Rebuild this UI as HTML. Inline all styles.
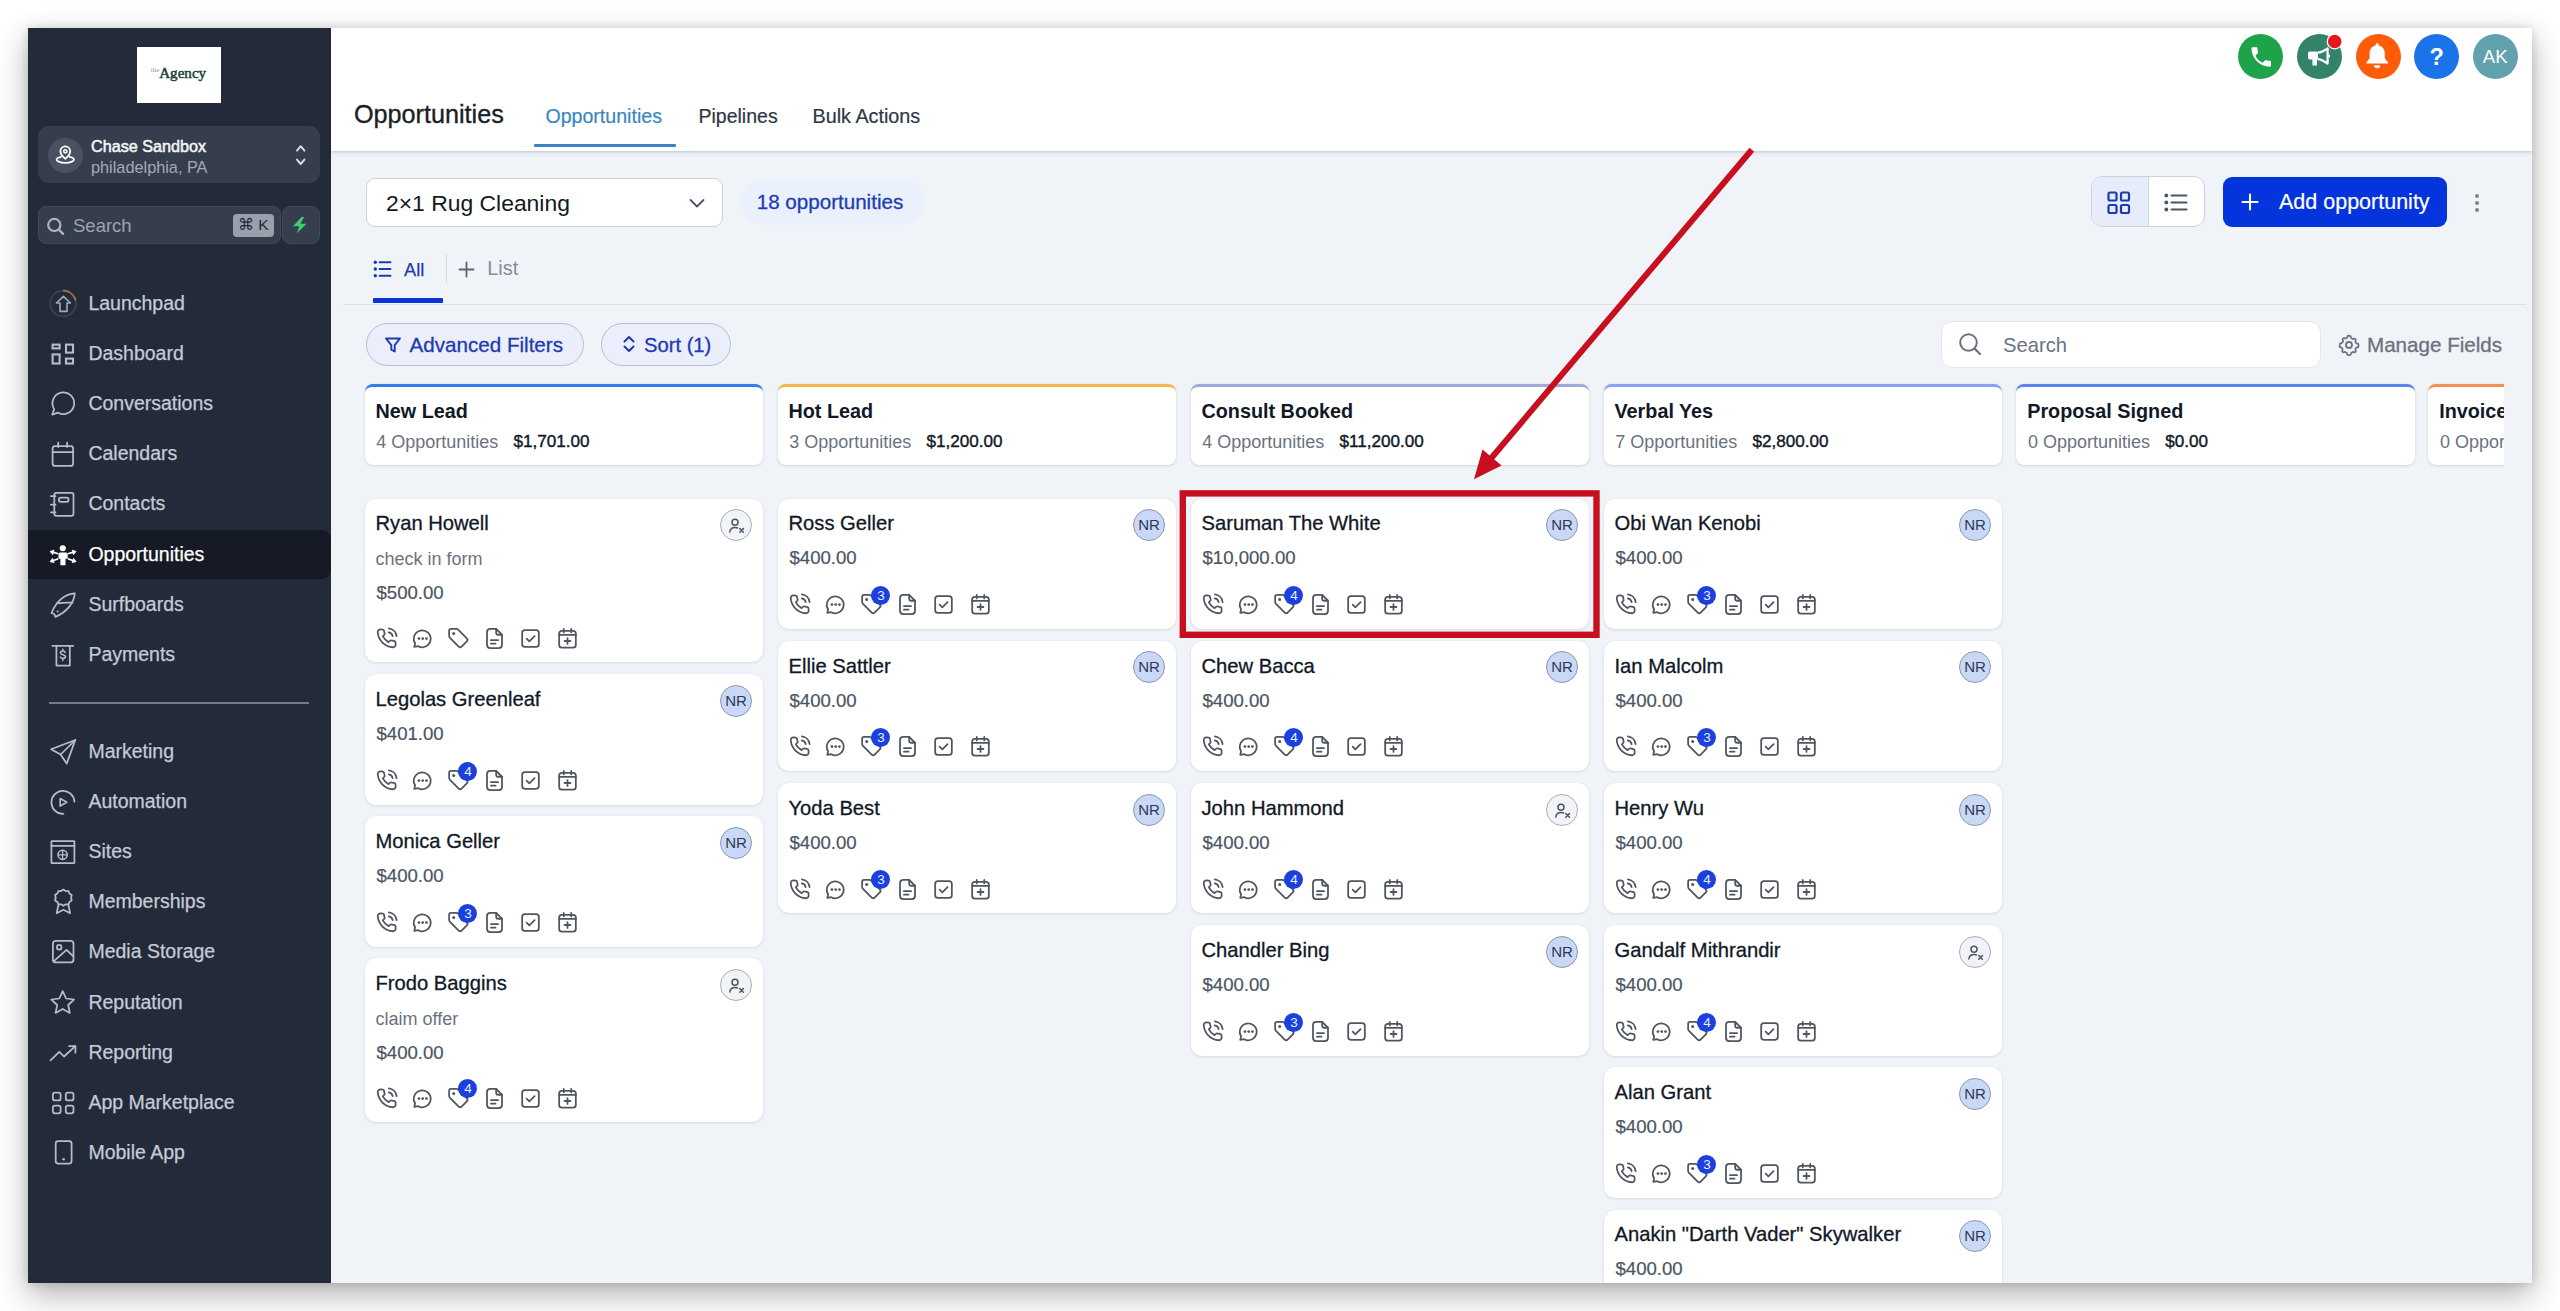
<!DOCTYPE html>
<html><head><meta charset="utf-8">
<style>
*{box-sizing:border-box;margin:0;padding:0}
html,body{width:2560px;height:1311px;overflow:hidden;background:#fff;font-family:"Liberation Sans",sans-serif}
.t{position:absolute;white-space:nowrap;line-height:1}
.ic{position:absolute;overflow:visible}
.b{position:absolute}
#shadow{position:absolute;left:28px;top:28px;width:2504px;height:1255px;box-shadow:0 12px 30px rgba(0,0,0,0.30),0 0 10px rgba(0,0,0,0.14)}
#win{position:absolute;left:0;top:0;width:2560px;height:1311px;clip-path:inset(28px 28px 28px 28px);background:#f0f4f9;overflow:hidden}
#side{position:absolute;left:28px;top:28px;width:303px;height:1255px;background:#232a3a}
#hdr{position:absolute;left:331px;top:28px;width:2201px;height:123px;background:#fff;box-shadow:0 1px 2px rgba(16,24,40,0.14),0 2px 6px rgba(16,24,40,0.08)}
.card{position:absolute;width:398.8px;background:#fff;border-radius:11px;box-shadow:0 1px 3px rgba(16,24,40,0.10),0 0 1px rgba(16,24,40,0.10)}
.colh{position:absolute;width:398.8px;height:80.5px;background:#fff;border-radius:8px;box-shadow:0 1px 3px rgba(16,24,40,0.12),0 0 1px rgba(16,24,40,0.12)}
.av{position:absolute;width:32px;height:32px;border-radius:50%;}
.nr{background:#c9d8f6;border:1px solid #8e98ab;color:#2b3a57;font-size:15px;text-align:center;line-height:30px}
.px{background:#f1f3f6;border:1px solid #a9afb9}
.badge{position:absolute;width:19px;height:19px;border-radius:50%;background:#1c40de;color:#e8f0ff;font-size:13.5px;line-height:19px;text-align:center}
.hc{position:absolute;width:45px;height:45px;border-radius:50%}
</style></head><body>
<div id="shadow"></div>
<div id="win">
<div id="side"></div>
<div id="hdr"></div>

<div class="b" style="left:137px;top:47px;width:84px;height:56px;background:#fff"></div>
<div class="t" style="left:159.2px;top:66.4px;font-size:15.1px;color:#1c4238;font-weight:400;font-family:'Liberation Serif',serif;-webkit-text-stroke:0.5px #1c4238">Agency</div>
<div class="t" style="left:150.8px;top:67.1px;font-size:7px;color:#6fa897;font-weight:400;font-family:'Liberation Serif',serif">the</div>
<div class="b" style="left:38px;top:126px;width:282px;height:57px;background:#363e4d;border-radius:11px"></div>
<div class="b" style="left:48px;top:137.5px;width:35px;height:35px;border-radius:50%;background:#4a5262"></div>
<svg class="ic" style="left:50px;top:140px" width="30" height="30" viewBox="50 140 30 30"><path d="M65.3 146.4a4.9 4.9 0 0 0-4.9 4.9c0 3.4 4.9 7.4 4.9 7.4s4.9-4 4.9-7.4a4.9 4.9 0 0 0-4.9-4.9Z" fill="none" stroke="#fff" stroke-width="1.8" stroke-linejoin="round"/><circle cx="65.3" cy="151.3" r="1.6" fill="none" stroke="#fff" stroke-width="1.6"/><path d="M61 156.8c-2.8.6-4.4 1.6-4.4 2.8 0 1.8 3.9 3.3 8.7 3.3s8.7-1.5 8.7-3.3c0-1.2-1.6-2.2-4.4-2.8" fill="none" stroke="#fff" stroke-width="1.8" stroke-linecap="round"/></svg>
<div class="t" style="left:91.0px;top:138.3px;font-size:16.2px;color:#f3f4f6;font-weight:400;-webkit-text-stroke:0.55px #f3f4f6">Chase Sandbox</div>
<div class="t" style="left:91.0px;top:159.2px;font-size:16.3px;color:#a3aab6;font-weight:400;">philadelphia, PA</div>
<svg class="ic" style="left:290px;top:140px" width="20" height="30" viewBox="290 140 20 30"><path d="M297 150.6l3.7-4.4 3.7 4.4M297 159.6l3.7 4.4 3.7-4.4" fill="none" stroke="#d6dae0" stroke-width="2" stroke-linecap="round" stroke-linejoin="round"/></svg>
<div class="b" style="left:38px;top:206px;width:243px;height:38px;background:#363e4d;border-radius:8px;border:1px solid #414958"></div>
<svg class="ic" style="left:44px;top:214px" width="24" height="24" viewBox="44 214 24 24"><circle cx="54.3" cy="225" r="6.1" fill="none" stroke="#adb3bd" stroke-width="2.2"/><path d="M58.8 229.6l4.3 4.2" stroke="#adb3bd" stroke-width="2.4" stroke-linecap="round"/></svg>
<div class="t" style="left:73.0px;top:216.7px;font-size:18.5px;color:#9ca3af;font-weight:400;">Search</div>
<div class="b" style="left:233px;top:214px;width:41px;height:22.5px;background:#9aa0ab;border-radius:4px"></div>
<div class="t" style="left:238.0px;top:217.4px;font-size:15.5px;color:#1f2937;font-weight:400;">&#8984; K</div>
<div class="b" style="left:282px;top:206px;width:38px;height:38px;background:#363e4d;border-radius:8px;border:1px solid #414958"></div>
<svg class="ic" style="left:290px;top:214px" width="22" height="22" viewBox="290 214 22 22"><path d="M301.6 216.9 293 226.3h6.3l-2.5 7 9.8-9.6h-6.2l3.8-6.8Z" fill="#3ecf6e"/></svg>
<div class="b" style="left:28px;top:529.5px;width:303px;height:49.5px;background:#151a24;border-radius:0 9px 9px 0"></div>
<div class="t" style="left:88.4px;top:293.5px;font-size:19.5px;color:#c5cbd5;font-weight:400;-webkit-text-stroke:0.25px #c5cbd5">Launchpad</div>
<svg class="ic" style="left:48.5px;top:289.5px" width="28" height="28" viewBox="0 0 28 28"><circle cx="14.1" cy="13.6" r="12.9" fill="none" stroke="#3a4353" stroke-width="1.7"/><path d="M14.8 0.7A12.9 12.9 0 0 1 26.4 9.6" fill="none" stroke="#a9714f" stroke-width="1.8" stroke-linecap="round" stroke-linejoin="round"/><path d="M14.4 6.3 21.4 13H18v8.4h-7V13H7.4Z" fill="none" stroke="#a3aab6" stroke-width="1.6" stroke-linecap="round" stroke-linejoin="round"/></svg>
<div class="t" style="left:88.4px;top:343.7px;font-size:19.5px;color:#c5cbd5;font-weight:400;-webkit-text-stroke:0.25px #c5cbd5">Dashboard</div>
<svg class="ic" style="left:48.5px;top:339.7px" width="28" height="28" viewBox="0 0 28 28"><rect x="3.6" y="4.6" width="7" height="3.8" rx="0" fill="none" stroke="#b7bdc8" stroke-width="2.1"/><rect x="17" y="4.6" width="7" height="8" rx="0" fill="none" stroke="#b7bdc8" stroke-width="2.1"/><rect x="3.6" y="14.4" width="7" height="9.1" rx="0" fill="none" stroke="#b7bdc8" stroke-width="2.1"/><rect x="17" y="18.6" width="7" height="4.9" rx="0" fill="none" stroke="#b7bdc8" stroke-width="2.1"/></svg>
<div class="t" style="left:88.4px;top:393.9px;font-size:19.5px;color:#c5cbd5;font-weight:400;-webkit-text-stroke:0.25px #c5cbd5">Conversations</div>
<svg class="ic" style="left:48.5px;top:389.9px" width="28" height="28" viewBox="0 0 28 28"><path d="M3.2 24.6 5.2 19.1A10.85 10.85 0 1 1 9 22.7Z" fill="none" stroke="#b7bdc8" stroke-width="1.75" stroke-linecap="round" stroke-linejoin="round"/></svg>
<div class="t" style="left:88.4px;top:444.1px;font-size:19.5px;color:#c5cbd5;font-weight:400;-webkit-text-stroke:0.25px #c5cbd5">Calendars</div>
<svg class="ic" style="left:48.5px;top:440.1px" width="28" height="28" viewBox="0 0 28 28"><rect x="3.6" y="6.1" width="20.5" height="19.8" rx="2.5" fill="none" stroke="#b7bdc8" stroke-width="1.75"/><path d="M3.6 12.1h20.5M9.2 2.6v4.5M18.1 2.6v4.5" fill="none" stroke="#b7bdc8" stroke-width="1.75" stroke-linecap="round" stroke-linejoin="round"/></svg>
<div class="t" style="left:88.4px;top:494.3px;font-size:19.5px;color:#c5cbd5;font-weight:400;-webkit-text-stroke:0.25px #c5cbd5">Contacts</div>
<svg class="ic" style="left:48.5px;top:490.3px" width="28" height="28" viewBox="0 0 28 28"><rect x="5.3" y="2.9" width="19.2" height="22.9" rx="2" fill="none" stroke="#b7bdc8" stroke-width="1.75"/><rect x="9.8" y="7.7" width="9.8" height="4.1" rx="2" fill="none" stroke="#b7bdc8" stroke-width="1.75"/><path d="M1.9 6.1h4.6M1.9 14.7h4.6M1.9 22.3h4.6" fill="none" stroke="#b7bdc8" stroke-width="1.75" stroke-linecap="round" stroke-linejoin="round"/></svg>
<div class="t" style="left:88.4px;top:544.5px;font-size:19.5px;color:#ffffff;font-weight:400;-webkit-text-stroke:0.25px #ffffff">Opportunities</div>
<svg class="ic" style="left:48.5px;top:540.5px" width="28" height="28" viewBox="0 0 28 28"><circle cx="13.8" cy="7.2" r="3.05" fill="#ffffff"/><path d="M11.3 11.6h5.6c1 0 1.8.8 1.8 1.8v4.3h-2.2v6.5h-5.1v-6.5H9.5v-4.3c0-1 .8-1.8 1.8-1.8Z" fill="#ffffff"/><path d="M8.6 12.5 4.5 11.4M19.6 12.5l4.1-1.1M8.6 18 4.4 19.5M19.6 18l4.2 1.5" fill="none" stroke="#ffffff" stroke-width="1.8" stroke-linecap="round" stroke-linejoin="round"/><path d="M1 10.4 5.1 9.05 3.83 13.67Z M27.2 10.4 23.1 9.05 24.37 13.67Z M1 20.7 5.19 21.75 3.59 17.23Z M27.2 20.7 23.01 21.75 24.61 17.23Z" fill="#ffffff" stroke="#ffffff" stroke-width="0.6" stroke-linejoin="round"/></svg>
<div class="t" style="left:88.4px;top:594.7px;font-size:19.5px;color:#c5cbd5;font-weight:400;-webkit-text-stroke:0.25px #c5cbd5">Surfboards</div>
<svg class="ic" style="left:48.5px;top:590.7px" width="28" height="28" viewBox="0 0 28 28"><path d="M25.8 2.3C16.5 2.6 7.5 9.5 2.5 22l3 1.2.9 2.7C18 21 25 12 25.8 2.3Z" fill="none" stroke="#b7bdc8" stroke-width="1.75" stroke-linecap="round" stroke-linejoin="round"/><path d="M7.8 12.4C12.5 11.6 18 11.4 23.5 11.6" fill="none" stroke="#b7bdc8" stroke-width="1.75" stroke-linecap="round" stroke-linejoin="round"/><circle cx="8.6" cy="20.4" r="1" fill="#b7bdc8"/></svg>
<div class="t" style="left:88.4px;top:644.9px;font-size:19.5px;color:#c5cbd5;font-weight:400;-webkit-text-stroke:0.25px #c5cbd5">Payments</div>
<svg class="ic" style="left:48.5px;top:640.9px" width="28" height="28" viewBox="0 0 28 28"><path d="M3.3 4.8h21M7.4 4.8v19.7h13.4V4.8" fill="none" stroke="#b7bdc8" stroke-width="1.75" stroke-linecap="round" stroke-linejoin="round"/><path d="M16.2 11.3c-.4-.8-1.2-1.3-2.4-1.3-1.4 0-2.4.7-2.4 1.8 0 2.5 5 1.2 5 3.8 0 1.1-1 1.8-2.5 1.8-1.2 0-2.1-.6-2.5-1.3M13.8 8.4v1.6M13.8 17.9v1.6" fill="none" stroke="#b7bdc8" stroke-width="1.6" stroke-linecap="round" stroke-linejoin="round"/></svg>
<div class="b" style="left:49px;top:702px;width:260px;height:2px;background:#737b88"></div>
<div class="t" style="left:88.4px;top:741.5px;font-size:19.5px;color:#c5cbd5;font-weight:400;-webkit-text-stroke:0.25px #c5cbd5">Marketing</div>
<svg class="ic" style="left:48.5px;top:737.5px" width="28" height="28" viewBox="0 0 28 28"><path d="M26.3 2 2.1 11.2l9.5 5.3 6.1 9.1Z" fill="none" stroke="#b7bdc8" stroke-width="1.75" stroke-linecap="round" stroke-linejoin="round"/><path d="M11.6 16.5 26.3 2" fill="none" stroke="#b7bdc8" stroke-width="1.75" stroke-linecap="round" stroke-linejoin="round"/></svg>
<div class="t" style="left:88.4px;top:791.7px;font-size:19.5px;color:#c5cbd5;font-weight:400;-webkit-text-stroke:0.25px #c5cbd5">Automation</div>
<svg class="ic" style="left:48.5px;top:787.7px" width="28" height="28" viewBox="0 0 28 28"><path d="M25.4 13.6A11.5 11.5 0 1 0 14.4 25.8" fill="none" stroke="#b7bdc8" stroke-width="1.75" stroke-linecap="round" stroke-linejoin="round"/><path d="M11.2 10.6v7.4l6.6-3.7Z" fill="none" stroke="#b7bdc8" stroke-width="1.7" stroke-linecap="round" stroke-linejoin="round"/></svg>
<div class="t" style="left:88.4px;top:841.9px;font-size:19.5px;color:#c5cbd5;font-weight:400;-webkit-text-stroke:0.25px #c5cbd5">Sites</div>
<svg class="ic" style="left:48.5px;top:837.9px" width="28" height="28" viewBox="0 0 28 28"><rect x="2.4" y="3" width="23" height="22.2" rx="0.5" fill="none" stroke="#b7bdc8" stroke-width="1.75"/><path d="M2.4 7.8h23" fill="none" stroke="#b7bdc8" stroke-width="1.75" stroke-linecap="round" stroke-linejoin="round"/><circle cx="13.6" cy="16.8" r="4.6" fill="none" stroke="#b7bdc8" stroke-width="1.5"/><path d="M9 16.8h9.2M13.6 12.2v9.2" fill="none" stroke="#b7bdc8" stroke-width="1.3" stroke-linecap="round" stroke-linejoin="round"/></svg>
<div class="t" style="left:88.4px;top:892.1px;font-size:19.5px;color:#c5cbd5;font-weight:400;-webkit-text-stroke:0.25px #c5cbd5">Memberships</div>
<svg class="ic" style="left:48.5px;top:888.1px" width="28" height="28" viewBox="0 0 28 28"><path d="M14.4 1.6l2.3 1.5 2.7-.1 1 2.5 2.3 1.5-.6 2.7.6 2.7-2.3 1.5-1 2.5-2.7-.1-2.3 1.5-2.3-1.5-2.7.1-1-2.5L6.1 12.4l.6-2.7-.6-2.7 2.3-1.5 1-2.5 2.7.1Z" fill="none" stroke="#b7bdc8" stroke-width="1.75" stroke-linecap="round" stroke-linejoin="round"/><path d="M9.5 16.5 7.7 25.2l6.7-3.4 6.7 3.4-1.8-8.7" fill="none" stroke="#b7bdc8" stroke-width="1.75" stroke-linecap="round" stroke-linejoin="round"/></svg>
<div class="t" style="left:88.4px;top:942.3px;font-size:19.5px;color:#c5cbd5;font-weight:400;-webkit-text-stroke:0.25px #c5cbd5">Media Storage</div>
<svg class="ic" style="left:48.5px;top:938.3px" width="28" height="28" viewBox="0 0 28 28"><rect x="3.9" y="2.9" width="20.6" height="21.5" rx="3" fill="none" stroke="#b7bdc8" stroke-width="1.75"/><circle cx="10.2" cy="9.2" r="2.3" fill="none" stroke="#b7bdc8" stroke-width="1.75"/><path d="M4.6 23.4 17.5 11.8l6.6 6.4" fill="none" stroke="#b7bdc8" stroke-width="1.75" stroke-linecap="round" stroke-linejoin="round"/></svg>
<div class="t" style="left:88.4px;top:992.5px;font-size:19.5px;color:#c5cbd5;font-weight:400;-webkit-text-stroke:0.25px #c5cbd5">Reputation</div>
<svg class="ic" style="left:48.5px;top:988.5px" width="28" height="28" viewBox="0 0 28 28"><path d="M13.7 2.2 17.1 9.5 25.1 10.5 19.2 16 20.8 23.9 13.7 20 6.6 23.9 8.2 16 2.3 10.5 10.3 9.5Z" fill="none" stroke="#b7bdc8" stroke-width="1.75" stroke-linecap="round" stroke-linejoin="round"/></svg>
<div class="t" style="left:88.4px;top:1042.7px;font-size:19.5px;color:#c5cbd5;font-weight:400;-webkit-text-stroke:0.25px #c5cbd5">Reporting</div>
<svg class="ic" style="left:48.5px;top:1038.7px" width="28" height="28" viewBox="0 0 28 28"><path d="M1.5 21.3 10.3 12.8l4.7 4.7L26.3 7.2" fill="none" stroke="#b7bdc8" stroke-width="1.75" stroke-linecap="round" stroke-linejoin="round"/><path d="M20 7.1h6.4v6.6" fill="none" stroke="#b7bdc8" stroke-width="1.75" stroke-linecap="round" stroke-linejoin="round"/></svg>
<div class="t" style="left:88.4px;top:1092.9px;font-size:19.5px;color:#c5cbd5;font-weight:400;-webkit-text-stroke:0.25px #c5cbd5">App Marketplace</div>
<svg class="ic" style="left:48.5px;top:1088.9px" width="28" height="28" viewBox="0 0 28 28"><rect x="3.9" y="3.7" width="7.7" height="7.7" rx="2" fill="none" stroke="#b7bdc8" stroke-width="1.75"/><rect x="16.8" y="3.7" width="7.7" height="7.7" rx="2" fill="none" stroke="#b7bdc8" stroke-width="1.75"/><rect x="3.9" y="16.6" width="7.7" height="7.7" rx="2" fill="none" stroke="#b7bdc8" stroke-width="1.75"/><rect x="16.8" y="16.6" width="7.7" height="7.7" rx="2" fill="none" stroke="#b7bdc8" stroke-width="1.75"/></svg>
<div class="t" style="left:88.4px;top:1143.1px;font-size:19.5px;color:#c5cbd5;font-weight:400;-webkit-text-stroke:0.25px #c5cbd5">Mobile App</div>
<svg class="ic" style="left:48.5px;top:1139.1px" width="28" height="28" viewBox="0 0 28 28"><rect x="6.7" y="2.1" width="15.9" height="22.5" rx="2.5" fill="none" stroke="#b7bdc8" stroke-width="1.75"/><circle cx="14.6" cy="20.3" r="1.3" fill="#b7bdc8"/></svg>
<div class="t" style="left:354.0px;top:101.7px;font-size:25.2px;color:#1a1e25;font-weight:400;-webkit-text-stroke:0.35px #1a1e25">Opportunities</div>
<div class="t" style="left:545.4px;top:106.9px;font-size:19.6px;color:#3b86c1;font-weight:400;-webkit-text-stroke:0.2px #3b86c1">Opportunities</div>
<div class="t" style="left:698.5px;top:107.0px;font-size:19.5px;color:#2f3744;font-weight:400;-webkit-text-stroke:0.2px #2f3744">Pipelines</div>
<div class="t" style="left:812.5px;top:106.7px;font-size:19.8px;color:#2f3744;font-weight:400;-webkit-text-stroke:0.2px #2f3744">Bulk Actions</div>
<div class="b" style="left:534px;top:144px;width:141.5px;height:3px;background:#3a83bf;border-radius:1px"></div>
<div class="hc" style="left:2238.3px;top:33.5px;background:#1fa34a"></div>
<div class="hc" style="left:2296.8px;top:33.5px;background:#33836a"></div>
<div class="hc" style="left:2355.5px;top:33.5px;background:#ff5c0a"></div>
<div class="hc" style="left:2414.1px;top:33.5px;background:#1a73e8"></div>
<div class="hc" style="left:2472.9px;top:33.5px;background:#62a1ae"></div>
<svg class="ic" style="left:2230px;top:28px" width="300" height="60" viewBox="2230 28 300 60"><g transform="translate(2248.25 43.95) scale(1.083)"><path d="M6.62 10.79c1.44 2.83 3.76 5.14 6.59 6.59l2.2-2.2c.27-.27.67-.36 1.02-.24 1.12.37 2.33.57 3.57.57.55 0 1 .45 1 1V20c0 .55-.45 1-1 1-9.39 0-17-7.61-17-17 0-.55.45-1 1-1h3.5c.55 0 1 .45 1 1 0 1.25.2 2.45.57 3.57.11.35.03.74-.25 1.02l-2.2 2.2z" fill="#fff"/></g><rect x="2308" y="51.6" width="10" height="8" rx="1.8" fill="#fff"/><rect x="2312.4" y="58" width="4.6" height="7.6" rx="1.2" fill="#fff"/><path d="M2317.5 52.6C2321.5 52.6 2324.5 50.5 2327.6 48.3V63.6C2324.5 61.4 2321.5 59.1 2317.5 59.1" fill="none" stroke="#fff" stroke-width="2.2" stroke-linejoin="round"/><rect x="2328.2" y="54.4" width="1.8" height="3.2" rx="0.8" fill="#fff"/><path d="M2377.2 43.3c1 0 1.6.7 1.6 1.6v.6c3.7.9 6 4 6 8v4.8l3.2 4.3c.3.5 0 1-.5 1h-20.6c-.5 0-.8-.5-.5-1l3.2-4.3v-4.8c0-4 2.3-7.1 6-8v-.6c0-.9.6-1.6 1.6-1.6Z" fill="#fff"/><path d="M2374.2 65.2h6a3 3 0 0 1-6 0Z" fill="#fff"/><circle cx="2334.7" cy="41.4" r="7.4" fill="#e8141e" stroke="#fff" stroke-width="1.3"/></svg>
<div class="t" style="left:2429.6px;top:45.6px;font-size:23.5px;color:#fff;font-weight:700;">?</div>
<div class="t" style="left:2482.8px;top:47.6px;font-size:18.6px;color:#fff;font-weight:400;">AK</div>
<div class="b" style="left:366px;top:177.7px;width:356.6px;height:49px;background:#fff;border:1px solid #cdd2da;border-radius:9px"></div>
<div class="t" style="left:386.0px;top:191.6px;font-size:22.9px;color:#14181f;font-weight:400;">2&#215;1 Rug Cleaning</div>
<svg class="ic" style="left:688.0px;top:194.0px" width="18" height="18" viewBox="0 0 18 18"><path d="M2.5 6l6.5 6.5L15.5 6" fill="none" stroke="#4b5563" stroke-width="1.8" stroke-linecap="round" stroke-linejoin="round"/></svg>
<div class="b" style="left:742px;top:180px;width:182px;height:44px;background:#eaf0fc;border-radius:22px;box-shadow:0 0 3px 1px #eaf0fc"></div>
<div class="t" style="left:756.7px;top:192.4px;font-size:20.6px;color:#1d3db5;font-weight:400;-webkit-text-stroke:0.3px #1d3db5">18 opportunities</div>
<svg class="ic" style="left:372.0px;top:258.0px" width="22" height="22" viewBox="0 0 22 22"><circle cx="3.3" cy="4.2" r="1.7" fill="#1e3ab0"/><circle cx="3.3" cy="11" r="1.7" fill="#1e3ab0"/><circle cx="3.3" cy="17.8" r="1.7" fill="#1e3ab0"/><path d="M7.5 4.2h11M7.5 11h11M7.5 17.8h11" stroke="#1e3ab0" stroke-width="1.9" stroke-linecap="round"/></svg>
<div class="t" style="left:404.0px;top:260.5px;font-size:18.3px;color:#1e3ab0;font-weight:400;-webkit-text-stroke:0.25px #1e3ab0">All</div>
<div class="b" style="left:445.5px;top:253.5px;width:1px;height:29px;background:#d6dbe2"></div>
<svg class="ic" style="left:458.0px;top:261.0px" width="17" height="17" viewBox="0 0 17 17"><path d="M8.5 1.5v14M1.5 8.5h14" stroke="#5b6270" stroke-width="1.8" stroke-linecap="round"/></svg>
<div class="t" style="left:487.3px;top:259.2px;font-size:19.9px;color:#858b97;font-weight:400;">List</div>
<div class="b" style="left:373px;top:298px;width:70px;height:4.5px;background:#0b35d6;border-radius:1px"></div>
<div class="b" style="left:343px;top:303.7px;width:2183px;height:1.5px;background:#dde1e7"></div>
<div class="b" style="left:2090.7px;top:176.4px;width:114.5px;height:51px;background:#fff;border:1.5px solid #cdd2da;border-radius:11px;overflow:hidden"><div style="position:absolute;left:0;top:0;width:57px;height:100%;background:#e6ecfa;border-right:1px solid #cfd6e0"></div></div>
<svg class="ic" style="left:2106.0px;top:190.0px" width="26" height="26" viewBox="0 0 26 26"><rect x="2.5" y="2.5" width="8" height="8" rx="1.6" fill="none" stroke="#1e3ab0" stroke-width="2.2"/><rect x="15" y="2.5" width="8" height="8" rx="1.6" fill="none" stroke="#1e3ab0" stroke-width="2.2"/><rect x="2.5" y="15" width="8" height="8" rx="1.6" fill="none" stroke="#1e3ab0" stroke-width="2.2"/><rect x="15" y="15" width="8" height="8" rx="1.6" fill="none" stroke="#1e3ab0" stroke-width="2.2"/></svg>
<svg class="ic" style="left:2164.0px;top:191.0px" width="25" height="25" viewBox="0 0 25 25"><circle cx="2.3" cy="4.5" r="1.9" fill="#4b5563"/><circle cx="2.3" cy="11.5" r="1.9" fill="#4b5563"/><circle cx="2.3" cy="18.5" r="1.9" fill="#4b5563"/><path d="M7.5 4.5h15M7.5 11.5h15M7.5 18.5h15" stroke="#4b5563" stroke-width="2" stroke-linecap="round"/></svg>
<div class="b" style="left:2222.7px;top:177px;width:224.5px;height:50px;background:#0434dc;border-radius:9px"></div>
<svg class="ic" style="left:2241.0px;top:193.0px" width="18" height="18" viewBox="0 0 18 18"><path d="M9 1.5v15M1.5 9h15" stroke="#fff" stroke-width="2.1" stroke-linecap="round"/></svg>
<div class="t" style="left:2279.0px;top:192.0px;font-size:21.5px;color:#ffffff;font-weight:400;-webkit-text-stroke:0.2px #fff">Add opportunity</div>
<div class="b" style="left:2474.6px;top:193.5px;width:4.7px;height:4.7px;border-radius:50%;background:#7d828c"></div>
<div class="b" style="left:2474.6px;top:200.5px;width:4.7px;height:4.7px;border-radius:50%;background:#7d828c"></div>
<div class="b" style="left:2474.6px;top:207.5px;width:4.7px;height:4.7px;border-radius:50%;background:#7d828c"></div>
<div class="b" style="left:366px;top:323px;width:217.5px;height:42.5px;background:#eaeffb;border:1px solid #b5bfd6;border-radius:22px"></div>
<svg class="ic" style="left:383.0px;top:335.0px" width="20" height="20" viewBox="0 0 20 20"><path d="M3 3.5h14l-5.3 6.6v6.4l-3.4-1.9v-4.5Z" fill="none" stroke="#1e3ab0" stroke-width="1.9" stroke-linejoin="round"/></svg>
<div class="t" style="left:409.6px;top:334.6px;font-size:20.6px;color:#1e3ab0;font-weight:400;-webkit-text-stroke:0.3px #1e3ab0">Advanced Filters</div>
<div class="b" style="left:601px;top:323px;width:129.5px;height:42.5px;background:#eaeffb;border:1px solid #b5bfd6;border-radius:22px"></div>
<svg class="ic" style="left:619.0px;top:334.0px" width="20" height="20" viewBox="0 0 20 20"><path d="M5.5 7.5 10 3l4.5 4.5M5.5 12.5 10 17l4.5-4.5" fill="none" stroke="#1e3ab0" stroke-width="2" stroke-linecap="round" stroke-linejoin="round"/></svg>
<div class="t" style="left:644.0px;top:334.9px;font-size:20.2px;color:#1e3ab0;font-weight:400;-webkit-text-stroke:0.3px #1e3ab0">Sort (1)</div>
<div class="b" style="left:1941px;top:320.7px;width:380px;height:47px;background:#fff;border:1px solid #e3e7ed;border-radius:11px"></div>
<svg class="ic" style="left:1957.0px;top:331.0px" width="27" height="27" viewBox="0 0 27 27"><circle cx="11.5" cy="11.5" r="8.3" fill="none" stroke="#6b7280" stroke-width="2"/><path d="M17.6 17.6 23 23" stroke="#6b7280" stroke-width="2.2" stroke-linecap="round"/></svg>
<div class="t" style="left:2003.0px;top:335.4px;font-size:20.2px;color:#6b7280;font-weight:400;">Search</div>
<svg class="ic" style="left:2338.0px;top:334.0px" width="22" height="22" viewBox="0 0 22 22"><circle cx="11" cy="11" r="3" fill="none" stroke="#6b7280" stroke-width="1.8"/><path d="M11 1.8l1.6.3.5 2 1.7 1 2-.6 1.1 1.2-.6 2 1 1.7 2 .5.3 1.6-.3 1.6-2 .5-1 1.7.6 2-1.1 1.2-2-.6-1.7 1-.5 2-1.6.3-1.6-.3-.5-2-1.7-1-2 .6-1.1-1.2.6-2-1-1.7-2-.5L1.8 11l.3-1.6 2-.5 1-1.7-.6-2L5.6 4l2 .6 1.7-1 .5-2Z" fill="none" stroke="#6b7280" stroke-width="1.7" stroke-linejoin="round"/></svg>
<div class="t" style="left:2367.0px;top:335.1px;font-size:20.6px;color:#6b7280;font-weight:400;-webkit-text-stroke:0.3px #6b7280">Manage Fields</div>
<div class="b" style="left:340px;top:370px;width:2164px;height:913px;overflow:hidden">
<div class="colh" style="left:24.5px;top:14.0px;border-top:3px solid #2f80ed"></div><div class="t" style="left:35.5px;top:31.5px;font-size:19.8px;color:#111827;font-weight:700;">New Lead</div><div class="t" style="left:36.3px;top:63.0px;font-size:18.0px;color:#6b7280;font-weight:400;">4 Opportunities</div><div class="t" style="left:173.5px;top:63.3px;font-size:17.1px;color:#111827;font-weight:400;-webkit-text-stroke:0.4px #111827">$1,701.00</div><div class="card" style="left:24.5px;top:128.5px;height:163.75px"></div><div class="t" style="left:35.5px;top:143.4px;font-size:20.2px;color:#111827;font-weight:400;-webkit-text-stroke:0.3px #111827">Ryan Howell</div><div class="t" style="left:35.5px;top:180.0px;font-size:18.0px;color:#6b7280;font-weight:400;">check in form</div><div class="t" style="left:36.5px;top:213.7px;font-size:18.6px;color:#4b5563;font-weight:400;-webkit-text-stroke:0.2px #4b5563">$500.00</div><div class="av px" style="left:380.1px;top:139.2px"></div><svg class="ic" style="left:387.1px;top:146.2px" width="18" height="18" viewBox="0 0 18 18"><circle cx="8" cy="6.3" r="3" fill="none" stroke="#4b5563" stroke-width="1.5"/><path d="M2.8 16c.4-2.9 2.5-4.6 5.2-4.6 1 0 1.8.2 2.5.6" fill="none" stroke="#4b5563" stroke-width="1.5" stroke-linecap="round"/><path d="M12.8 12.6l3.6 3.6M16.4 12.6l-3.6 3.6" stroke="#4b5563" stroke-width="1.5" stroke-linecap="round"/></svg><svg class="ic" style="left:33.5px;top:255.6px" width="25" height="25" viewBox="0 0 24 24"><path d="M14.2 6.1a4.6 4.6 0 0 1 3.7 3.7M14.3 2.3a8.4 8.4 0 0 1 7.4 7.4" fill="none" stroke="#50555f" stroke-width="1.7" stroke-linecap="round"/><path d="M6.3 3.2 8.6 3.4c.5 0 .8.4.9.8l.7 3.1c.1.4 0 .8-.3 1.1L8.5 10a12.6 12.6 0 0 0 5.5 5.5l1.6-1.4c.3-.3.7-.4 1.1-.3l3.1.7c.4.1.8.4.8.9l.2 2.3c.1 1.5-1.1 2.8-2.6 2.7C10.4 20 4 13.6 3.6 5.8 3.5 4.3 4.8 3.1 6.3 3.2Z" fill="none" stroke="#50555f" stroke-width="1.7" stroke-linejoin="round"/></svg><svg class="ic" style="left:69.7px;top:255.6px" width="25" height="25" viewBox="0 0 24 24"><path d="M4.1 20.1 4.9 16.6A8.1 8.1 0 1 1 7.9 19.4Z" fill="none" stroke="#50555f" stroke-width="1.7" stroke-linejoin="round"/><circle cx="8.6" cy="12.1" r="1.3" fill="#50555f"/><circle cx="12.2" cy="12.1" r="1.3" fill="#50555f"/><circle cx="15.8" cy="12.1" r="1.3" fill="#50555f"/></svg><svg class="ic" style="left:105.9px;top:255.6px" width="25" height="25" viewBox="0 0 24 24"><path d="M3 4.6v5.1c0 .5.2 1 .6 1.4l8.6 8.6c.8.8 2 .8 2.8 0l5-5c.8-.8.8-2 0-2.8L11.4 3.3c-.4-.4-.9-.6-1.4-.6H4.9C3.9 2.7 3 3.6 3 4.6Z" fill="none" stroke="#50555f" stroke-width="1.7" stroke-linejoin="round"/><circle cx="7.4" cy="7.1" r="1.45" fill="#50555f"/></svg><svg class="ic" style="left:142.1px;top:255.6px" width="25" height="25" viewBox="0 0 24 24"><path d="M13.6 2.8H8c-2 0-3.2 1.2-3.2 3.2v12c0 2 1.2 3.2 3.2 3.2h8c2 0 3.2-1.2 3.2-3.2V8.4Z" fill="none" stroke="#50555f" stroke-width="1.7" stroke-linejoin="round"/><path d="M13.6 2.8v3.6c0 1.1.9 2 2 2h3.6M8.6 13.6h6.8M8.6 17h4.4" fill="none" stroke="#50555f" stroke-width="1.7" stroke-linecap="round"/></svg><svg class="ic" style="left:178.3px;top:255.6px" width="25" height="25" viewBox="0 0 24 24"><rect x="4" y="4" width="16" height="16" rx="2.6" fill="none" stroke="#50555f" stroke-width="1.7"/><path d="M8.3 12.1l2.6 2.6 5-5" fill="none" stroke="#50555f" stroke-width="1.7" stroke-linecap="round" stroke-linejoin="round"/></svg><svg class="ic" style="left:214.5px;top:255.6px" width="25" height="25" viewBox="0 0 24 24"><rect x="4" y="4.6" width="16" height="16.2" rx="2.6" fill="none" stroke="#50555f" stroke-width="1.7"/><path d="M4 8.6h16M8.4 2.8v3.4M15.6 2.8v3.4M12 11.6v5.6M9.2 14.4h5.6" fill="none" stroke="#50555f" stroke-width="1.7" stroke-linecap="round"/></svg><div class="card" style="left:24.5px;top:304.0px;height:130.5px"></div><div class="t" style="left:35.5px;top:318.9px;font-size:20.2px;color:#111827;font-weight:400;-webkit-text-stroke:0.3px #111827">Legolas Greenleaf</div><div class="t" style="left:36.5px;top:354.8px;font-size:18.6px;color:#4b5563;font-weight:400;-webkit-text-stroke:0.2px #4b5563">$401.00</div><div class="av nr" style="left:380.1px;top:314.7px">NR</div><svg class="ic" style="left:33.5px;top:397.7px" width="25" height="25" viewBox="0 0 24 24"><path d="M14.2 6.1a4.6 4.6 0 0 1 3.7 3.7M14.3 2.3a8.4 8.4 0 0 1 7.4 7.4" fill="none" stroke="#50555f" stroke-width="1.7" stroke-linecap="round"/><path d="M6.3 3.2 8.6 3.4c.5 0 .8.4.9.8l.7 3.1c.1.4 0 .8-.3 1.1L8.5 10a12.6 12.6 0 0 0 5.5 5.5l1.6-1.4c.3-.3.7-.4 1.1-.3l3.1.7c.4.1.8.4.8.9l.2 2.3c.1 1.5-1.1 2.8-2.6 2.7C10.4 20 4 13.6 3.6 5.8 3.5 4.3 4.8 3.1 6.3 3.2Z" fill="none" stroke="#50555f" stroke-width="1.7" stroke-linejoin="round"/></svg><svg class="ic" style="left:69.7px;top:397.7px" width="25" height="25" viewBox="0 0 24 24"><path d="M4.1 20.1 4.9 16.6A8.1 8.1 0 1 1 7.9 19.4Z" fill="none" stroke="#50555f" stroke-width="1.7" stroke-linejoin="round"/><circle cx="8.6" cy="12.1" r="1.3" fill="#50555f"/><circle cx="12.2" cy="12.1" r="1.3" fill="#50555f"/><circle cx="15.8" cy="12.1" r="1.3" fill="#50555f"/></svg><svg class="ic" style="left:105.9px;top:397.7px" width="25" height="25" viewBox="0 0 24 24"><path d="M3 4.6v5.1c0 .5.2 1 .6 1.4l8.6 8.6c.8.8 2 .8 2.8 0l5-5c.8-.8.8-2 0-2.8L11.4 3.3c-.4-.4-.9-.6-1.4-.6H4.9C3.9 2.7 3 3.6 3 4.6Z" fill="none" stroke="#50555f" stroke-width="1.7" stroke-linejoin="round"/><circle cx="7.4" cy="7.1" r="1.45" fill="#50555f"/></svg><svg class="ic" style="left:142.1px;top:397.7px" width="25" height="25" viewBox="0 0 24 24"><path d="M13.6 2.8H8c-2 0-3.2 1.2-3.2 3.2v12c0 2 1.2 3.2 3.2 3.2h8c2 0 3.2-1.2 3.2-3.2V8.4Z" fill="none" stroke="#50555f" stroke-width="1.7" stroke-linejoin="round"/><path d="M13.6 2.8v3.6c0 1.1.9 2 2 2h3.6M8.6 13.6h6.8M8.6 17h4.4" fill="none" stroke="#50555f" stroke-width="1.7" stroke-linecap="round"/></svg><svg class="ic" style="left:178.3px;top:397.7px" width="25" height="25" viewBox="0 0 24 24"><rect x="4" y="4" width="16" height="16" rx="2.6" fill="none" stroke="#50555f" stroke-width="1.7"/><path d="M8.3 12.1l2.6 2.6 5-5" fill="none" stroke="#50555f" stroke-width="1.7" stroke-linecap="round" stroke-linejoin="round"/></svg><svg class="ic" style="left:214.5px;top:397.7px" width="25" height="25" viewBox="0 0 24 24"><rect x="4" y="4.6" width="16" height="16.2" rx="2.6" fill="none" stroke="#50555f" stroke-width="1.7"/><path d="M4 8.6h16M8.4 2.8v3.4M15.6 2.8v3.4M12 11.6v5.6M9.2 14.4h5.6" fill="none" stroke="#50555f" stroke-width="1.7" stroke-linecap="round"/></svg><div class="badge" style="left:118.4px;top:391.5px">4</div><div class="card" style="left:24.5px;top:446.2px;height:130.5px"></div><div class="t" style="left:35.5px;top:461.1px;font-size:20.2px;color:#111827;font-weight:400;-webkit-text-stroke:0.3px #111827">Monica Geller</div><div class="t" style="left:36.5px;top:497.0px;font-size:18.6px;color:#4b5563;font-weight:400;-webkit-text-stroke:0.2px #4b5563">$400.00</div><div class="av nr" style="left:380.1px;top:456.9px">NR</div><svg class="ic" style="left:33.5px;top:539.9px" width="25" height="25" viewBox="0 0 24 24"><path d="M14.2 6.1a4.6 4.6 0 0 1 3.7 3.7M14.3 2.3a8.4 8.4 0 0 1 7.4 7.4" fill="none" stroke="#50555f" stroke-width="1.7" stroke-linecap="round"/><path d="M6.3 3.2 8.6 3.4c.5 0 .8.4.9.8l.7 3.1c.1.4 0 .8-.3 1.1L8.5 10a12.6 12.6 0 0 0 5.5 5.5l1.6-1.4c.3-.3.7-.4 1.1-.3l3.1.7c.4.1.8.4.8.9l.2 2.3c.1 1.5-1.1 2.8-2.6 2.7C10.4 20 4 13.6 3.6 5.8 3.5 4.3 4.8 3.1 6.3 3.2Z" fill="none" stroke="#50555f" stroke-width="1.7" stroke-linejoin="round"/></svg><svg class="ic" style="left:69.7px;top:539.9px" width="25" height="25" viewBox="0 0 24 24"><path d="M4.1 20.1 4.9 16.6A8.1 8.1 0 1 1 7.9 19.4Z" fill="none" stroke="#50555f" stroke-width="1.7" stroke-linejoin="round"/><circle cx="8.6" cy="12.1" r="1.3" fill="#50555f"/><circle cx="12.2" cy="12.1" r="1.3" fill="#50555f"/><circle cx="15.8" cy="12.1" r="1.3" fill="#50555f"/></svg><svg class="ic" style="left:105.9px;top:539.9px" width="25" height="25" viewBox="0 0 24 24"><path d="M3 4.6v5.1c0 .5.2 1 .6 1.4l8.6 8.6c.8.8 2 .8 2.8 0l5-5c.8-.8.8-2 0-2.8L11.4 3.3c-.4-.4-.9-.6-1.4-.6H4.9C3.9 2.7 3 3.6 3 4.6Z" fill="none" stroke="#50555f" stroke-width="1.7" stroke-linejoin="round"/><circle cx="7.4" cy="7.1" r="1.45" fill="#50555f"/></svg><svg class="ic" style="left:142.1px;top:539.9px" width="25" height="25" viewBox="0 0 24 24"><path d="M13.6 2.8H8c-2 0-3.2 1.2-3.2 3.2v12c0 2 1.2 3.2 3.2 3.2h8c2 0 3.2-1.2 3.2-3.2V8.4Z" fill="none" stroke="#50555f" stroke-width="1.7" stroke-linejoin="round"/><path d="M13.6 2.8v3.6c0 1.1.9 2 2 2h3.6M8.6 13.6h6.8M8.6 17h4.4" fill="none" stroke="#50555f" stroke-width="1.7" stroke-linecap="round"/></svg><svg class="ic" style="left:178.3px;top:539.9px" width="25" height="25" viewBox="0 0 24 24"><rect x="4" y="4" width="16" height="16" rx="2.6" fill="none" stroke="#50555f" stroke-width="1.7"/><path d="M8.3 12.1l2.6 2.6 5-5" fill="none" stroke="#50555f" stroke-width="1.7" stroke-linecap="round" stroke-linejoin="round"/></svg><svg class="ic" style="left:214.5px;top:539.9px" width="25" height="25" viewBox="0 0 24 24"><rect x="4" y="4.6" width="16" height="16.2" rx="2.6" fill="none" stroke="#50555f" stroke-width="1.7"/><path d="M4 8.6h16M8.4 2.8v3.4M15.6 2.8v3.4M12 11.6v5.6M9.2 14.4h5.6" fill="none" stroke="#50555f" stroke-width="1.7" stroke-linecap="round"/></svg><div class="badge" style="left:118.4px;top:533.7px">3</div><div class="card" style="left:24.5px;top:588.4px;height:163.75px"></div><div class="t" style="left:35.5px;top:603.3px;font-size:20.2px;color:#111827;font-weight:400;-webkit-text-stroke:0.3px #111827">Frodo Baggins</div><div class="t" style="left:35.5px;top:639.8px;font-size:18.0px;color:#6b7280;font-weight:400;">claim offer</div><div class="t" style="left:36.5px;top:673.5px;font-size:18.6px;color:#4b5563;font-weight:400;-webkit-text-stroke:0.2px #4b5563">$400.00</div><div class="av px" style="left:380.1px;top:599.1px"></div><svg class="ic" style="left:387.1px;top:606.1px" width="18" height="18" viewBox="0 0 18 18"><circle cx="8" cy="6.3" r="3" fill="none" stroke="#4b5563" stroke-width="1.5"/><path d="M2.8 16c.4-2.9 2.5-4.6 5.2-4.6 1 0 1.8.2 2.5.6" fill="none" stroke="#4b5563" stroke-width="1.5" stroke-linecap="round"/><path d="M12.8 12.6l3.6 3.6M16.4 12.6l-3.6 3.6" stroke="#4b5563" stroke-width="1.5" stroke-linecap="round"/></svg><svg class="ic" style="left:33.5px;top:715.5px" width="25" height="25" viewBox="0 0 24 24"><path d="M14.2 6.1a4.6 4.6 0 0 1 3.7 3.7M14.3 2.3a8.4 8.4 0 0 1 7.4 7.4" fill="none" stroke="#50555f" stroke-width="1.7" stroke-linecap="round"/><path d="M6.3 3.2 8.6 3.4c.5 0 .8.4.9.8l.7 3.1c.1.4 0 .8-.3 1.1L8.5 10a12.6 12.6 0 0 0 5.5 5.5l1.6-1.4c.3-.3.7-.4 1.1-.3l3.1.7c.4.1.8.4.8.9l.2 2.3c.1 1.5-1.1 2.8-2.6 2.7C10.4 20 4 13.6 3.6 5.8 3.5 4.3 4.8 3.1 6.3 3.2Z" fill="none" stroke="#50555f" stroke-width="1.7" stroke-linejoin="round"/></svg><svg class="ic" style="left:69.7px;top:715.5px" width="25" height="25" viewBox="0 0 24 24"><path d="M4.1 20.1 4.9 16.6A8.1 8.1 0 1 1 7.9 19.4Z" fill="none" stroke="#50555f" stroke-width="1.7" stroke-linejoin="round"/><circle cx="8.6" cy="12.1" r="1.3" fill="#50555f"/><circle cx="12.2" cy="12.1" r="1.3" fill="#50555f"/><circle cx="15.8" cy="12.1" r="1.3" fill="#50555f"/></svg><svg class="ic" style="left:105.9px;top:715.5px" width="25" height="25" viewBox="0 0 24 24"><path d="M3 4.6v5.1c0 .5.2 1 .6 1.4l8.6 8.6c.8.8 2 .8 2.8 0l5-5c.8-.8.8-2 0-2.8L11.4 3.3c-.4-.4-.9-.6-1.4-.6H4.9C3.9 2.7 3 3.6 3 4.6Z" fill="none" stroke="#50555f" stroke-width="1.7" stroke-linejoin="round"/><circle cx="7.4" cy="7.1" r="1.45" fill="#50555f"/></svg><svg class="ic" style="left:142.1px;top:715.5px" width="25" height="25" viewBox="0 0 24 24"><path d="M13.6 2.8H8c-2 0-3.2 1.2-3.2 3.2v12c0 2 1.2 3.2 3.2 3.2h8c2 0 3.2-1.2 3.2-3.2V8.4Z" fill="none" stroke="#50555f" stroke-width="1.7" stroke-linejoin="round"/><path d="M13.6 2.8v3.6c0 1.1.9 2 2 2h3.6M8.6 13.6h6.8M8.6 17h4.4" fill="none" stroke="#50555f" stroke-width="1.7" stroke-linecap="round"/></svg><svg class="ic" style="left:178.3px;top:715.5px" width="25" height="25" viewBox="0 0 24 24"><rect x="4" y="4" width="16" height="16" rx="2.6" fill="none" stroke="#50555f" stroke-width="1.7"/><path d="M8.3 12.1l2.6 2.6 5-5" fill="none" stroke="#50555f" stroke-width="1.7" stroke-linecap="round" stroke-linejoin="round"/></svg><svg class="ic" style="left:214.5px;top:715.5px" width="25" height="25" viewBox="0 0 24 24"><rect x="4" y="4.6" width="16" height="16.2" rx="2.6" fill="none" stroke="#50555f" stroke-width="1.7"/><path d="M4 8.6h16M8.4 2.8v3.4M15.6 2.8v3.4M12 11.6v5.6M9.2 14.4h5.6" fill="none" stroke="#50555f" stroke-width="1.7" stroke-linecap="round"/></svg><div class="badge" style="left:118.4px;top:709.3px">4</div><div class="colh" style="left:437.5px;top:14.0px;border-top:3px solid #f6b84b"></div><div class="t" style="left:448.5px;top:31.5px;font-size:19.8px;color:#111827;font-weight:700;">Hot Lead</div><div class="t" style="left:449.3px;top:63.0px;font-size:18.0px;color:#6b7280;font-weight:400;">3 Opportunities</div><div class="t" style="left:586.5px;top:63.3px;font-size:17.1px;color:#111827;font-weight:400;-webkit-text-stroke:0.4px #111827">$1,200.00</div><div class="card" style="left:437.5px;top:128.5px;height:130.5px"></div><div class="t" style="left:448.5px;top:143.4px;font-size:20.2px;color:#111827;font-weight:400;-webkit-text-stroke:0.3px #111827">Ross Geller</div><div class="t" style="left:449.5px;top:179.4px;font-size:18.6px;color:#4b5563;font-weight:400;-webkit-text-stroke:0.2px #4b5563">$400.00</div><div class="av nr" style="left:793.1px;top:139.2px">NR</div><svg class="ic" style="left:446.5px;top:222.2px" width="25" height="25" viewBox="0 0 24 24"><path d="M14.2 6.1a4.6 4.6 0 0 1 3.7 3.7M14.3 2.3a8.4 8.4 0 0 1 7.4 7.4" fill="none" stroke="#50555f" stroke-width="1.7" stroke-linecap="round"/><path d="M6.3 3.2 8.6 3.4c.5 0 .8.4.9.8l.7 3.1c.1.4 0 .8-.3 1.1L8.5 10a12.6 12.6 0 0 0 5.5 5.5l1.6-1.4c.3-.3.7-.4 1.1-.3l3.1.7c.4.1.8.4.8.9l.2 2.3c.1 1.5-1.1 2.8-2.6 2.7C10.4 20 4 13.6 3.6 5.8 3.5 4.3 4.8 3.1 6.3 3.2Z" fill="none" stroke="#50555f" stroke-width="1.7" stroke-linejoin="round"/></svg><svg class="ic" style="left:482.7px;top:222.2px" width="25" height="25" viewBox="0 0 24 24"><path d="M4.1 20.1 4.9 16.6A8.1 8.1 0 1 1 7.9 19.4Z" fill="none" stroke="#50555f" stroke-width="1.7" stroke-linejoin="round"/><circle cx="8.6" cy="12.1" r="1.3" fill="#50555f"/><circle cx="12.2" cy="12.1" r="1.3" fill="#50555f"/><circle cx="15.8" cy="12.1" r="1.3" fill="#50555f"/></svg><svg class="ic" style="left:518.9px;top:222.2px" width="25" height="25" viewBox="0 0 24 24"><path d="M3 4.6v5.1c0 .5.2 1 .6 1.4l8.6 8.6c.8.8 2 .8 2.8 0l5-5c.8-.8.8-2 0-2.8L11.4 3.3c-.4-.4-.9-.6-1.4-.6H4.9C3.9 2.7 3 3.6 3 4.6Z" fill="none" stroke="#50555f" stroke-width="1.7" stroke-linejoin="round"/><circle cx="7.4" cy="7.1" r="1.45" fill="#50555f"/></svg><svg class="ic" style="left:555.1px;top:222.2px" width="25" height="25" viewBox="0 0 24 24"><path d="M13.6 2.8H8c-2 0-3.2 1.2-3.2 3.2v12c0 2 1.2 3.2 3.2 3.2h8c2 0 3.2-1.2 3.2-3.2V8.4Z" fill="none" stroke="#50555f" stroke-width="1.7" stroke-linejoin="round"/><path d="M13.6 2.8v3.6c0 1.1.9 2 2 2h3.6M8.6 13.6h6.8M8.6 17h4.4" fill="none" stroke="#50555f" stroke-width="1.7" stroke-linecap="round"/></svg><svg class="ic" style="left:591.3px;top:222.2px" width="25" height="25" viewBox="0 0 24 24"><rect x="4" y="4" width="16" height="16" rx="2.6" fill="none" stroke="#50555f" stroke-width="1.7"/><path d="M8.3 12.1l2.6 2.6 5-5" fill="none" stroke="#50555f" stroke-width="1.7" stroke-linecap="round" stroke-linejoin="round"/></svg><svg class="ic" style="left:627.5px;top:222.2px" width="25" height="25" viewBox="0 0 24 24"><rect x="4" y="4.6" width="16" height="16.2" rx="2.6" fill="none" stroke="#50555f" stroke-width="1.7"/><path d="M4 8.6h16M8.4 2.8v3.4M15.6 2.8v3.4M12 11.6v5.6M9.2 14.4h5.6" fill="none" stroke="#50555f" stroke-width="1.7" stroke-linecap="round"/></svg><div class="badge" style="left:531.4px;top:216.0px">3</div><div class="card" style="left:437.5px;top:270.7px;height:130.5px"></div><div class="t" style="left:448.5px;top:285.6px;font-size:20.2px;color:#111827;font-weight:400;-webkit-text-stroke:0.3px #111827">Ellie Sattler</div><div class="t" style="left:449.5px;top:321.6px;font-size:18.6px;color:#4b5563;font-weight:400;-webkit-text-stroke:0.2px #4b5563">$400.00</div><div class="av nr" style="left:793.1px;top:281.4px">NR</div><svg class="ic" style="left:446.5px;top:364.4px" width="25" height="25" viewBox="0 0 24 24"><path d="M14.2 6.1a4.6 4.6 0 0 1 3.7 3.7M14.3 2.3a8.4 8.4 0 0 1 7.4 7.4" fill="none" stroke="#50555f" stroke-width="1.7" stroke-linecap="round"/><path d="M6.3 3.2 8.6 3.4c.5 0 .8.4.9.8l.7 3.1c.1.4 0 .8-.3 1.1L8.5 10a12.6 12.6 0 0 0 5.5 5.5l1.6-1.4c.3-.3.7-.4 1.1-.3l3.1.7c.4.1.8.4.8.9l.2 2.3c.1 1.5-1.1 2.8-2.6 2.7C10.4 20 4 13.6 3.6 5.8 3.5 4.3 4.8 3.1 6.3 3.2Z" fill="none" stroke="#50555f" stroke-width="1.7" stroke-linejoin="round"/></svg><svg class="ic" style="left:482.7px;top:364.4px" width="25" height="25" viewBox="0 0 24 24"><path d="M4.1 20.1 4.9 16.6A8.1 8.1 0 1 1 7.9 19.4Z" fill="none" stroke="#50555f" stroke-width="1.7" stroke-linejoin="round"/><circle cx="8.6" cy="12.1" r="1.3" fill="#50555f"/><circle cx="12.2" cy="12.1" r="1.3" fill="#50555f"/><circle cx="15.8" cy="12.1" r="1.3" fill="#50555f"/></svg><svg class="ic" style="left:518.9px;top:364.4px" width="25" height="25" viewBox="0 0 24 24"><path d="M3 4.6v5.1c0 .5.2 1 .6 1.4l8.6 8.6c.8.8 2 .8 2.8 0l5-5c.8-.8.8-2 0-2.8L11.4 3.3c-.4-.4-.9-.6-1.4-.6H4.9C3.9 2.7 3 3.6 3 4.6Z" fill="none" stroke="#50555f" stroke-width="1.7" stroke-linejoin="round"/><circle cx="7.4" cy="7.1" r="1.45" fill="#50555f"/></svg><svg class="ic" style="left:555.1px;top:364.4px" width="25" height="25" viewBox="0 0 24 24"><path d="M13.6 2.8H8c-2 0-3.2 1.2-3.2 3.2v12c0 2 1.2 3.2 3.2 3.2h8c2 0 3.2-1.2 3.2-3.2V8.4Z" fill="none" stroke="#50555f" stroke-width="1.7" stroke-linejoin="round"/><path d="M13.6 2.8v3.6c0 1.1.9 2 2 2h3.6M8.6 13.6h6.8M8.6 17h4.4" fill="none" stroke="#50555f" stroke-width="1.7" stroke-linecap="round"/></svg><svg class="ic" style="left:591.3px;top:364.4px" width="25" height="25" viewBox="0 0 24 24"><rect x="4" y="4" width="16" height="16" rx="2.6" fill="none" stroke="#50555f" stroke-width="1.7"/><path d="M8.3 12.1l2.6 2.6 5-5" fill="none" stroke="#50555f" stroke-width="1.7" stroke-linecap="round" stroke-linejoin="round"/></svg><svg class="ic" style="left:627.5px;top:364.4px" width="25" height="25" viewBox="0 0 24 24"><rect x="4" y="4.6" width="16" height="16.2" rx="2.6" fill="none" stroke="#50555f" stroke-width="1.7"/><path d="M4 8.6h16M8.4 2.8v3.4M15.6 2.8v3.4M12 11.6v5.6M9.2 14.4h5.6" fill="none" stroke="#50555f" stroke-width="1.7" stroke-linecap="round"/></svg><div class="badge" style="left:531.4px;top:358.2px">3</div><div class="card" style="left:437.5px;top:412.9px;height:130.5px"></div><div class="t" style="left:448.5px;top:427.8px;font-size:20.2px;color:#111827;font-weight:400;-webkit-text-stroke:0.3px #111827">Yoda Best</div><div class="t" style="left:449.5px;top:463.8px;font-size:18.6px;color:#4b5563;font-weight:400;-webkit-text-stroke:0.2px #4b5563">$400.00</div><div class="av nr" style="left:793.1px;top:423.6px">NR</div><svg class="ic" style="left:446.5px;top:506.6px" width="25" height="25" viewBox="0 0 24 24"><path d="M14.2 6.1a4.6 4.6 0 0 1 3.7 3.7M14.3 2.3a8.4 8.4 0 0 1 7.4 7.4" fill="none" stroke="#50555f" stroke-width="1.7" stroke-linecap="round"/><path d="M6.3 3.2 8.6 3.4c.5 0 .8.4.9.8l.7 3.1c.1.4 0 .8-.3 1.1L8.5 10a12.6 12.6 0 0 0 5.5 5.5l1.6-1.4c.3-.3.7-.4 1.1-.3l3.1.7c.4.1.8.4.8.9l.2 2.3c.1 1.5-1.1 2.8-2.6 2.7C10.4 20 4 13.6 3.6 5.8 3.5 4.3 4.8 3.1 6.3 3.2Z" fill="none" stroke="#50555f" stroke-width="1.7" stroke-linejoin="round"/></svg><svg class="ic" style="left:482.7px;top:506.6px" width="25" height="25" viewBox="0 0 24 24"><path d="M4.1 20.1 4.9 16.6A8.1 8.1 0 1 1 7.9 19.4Z" fill="none" stroke="#50555f" stroke-width="1.7" stroke-linejoin="round"/><circle cx="8.6" cy="12.1" r="1.3" fill="#50555f"/><circle cx="12.2" cy="12.1" r="1.3" fill="#50555f"/><circle cx="15.8" cy="12.1" r="1.3" fill="#50555f"/></svg><svg class="ic" style="left:518.9px;top:506.6px" width="25" height="25" viewBox="0 0 24 24"><path d="M3 4.6v5.1c0 .5.2 1 .6 1.4l8.6 8.6c.8.8 2 .8 2.8 0l5-5c.8-.8.8-2 0-2.8L11.4 3.3c-.4-.4-.9-.6-1.4-.6H4.9C3.9 2.7 3 3.6 3 4.6Z" fill="none" stroke="#50555f" stroke-width="1.7" stroke-linejoin="round"/><circle cx="7.4" cy="7.1" r="1.45" fill="#50555f"/></svg><svg class="ic" style="left:555.1px;top:506.6px" width="25" height="25" viewBox="0 0 24 24"><path d="M13.6 2.8H8c-2 0-3.2 1.2-3.2 3.2v12c0 2 1.2 3.2 3.2 3.2h8c2 0 3.2-1.2 3.2-3.2V8.4Z" fill="none" stroke="#50555f" stroke-width="1.7" stroke-linejoin="round"/><path d="M13.6 2.8v3.6c0 1.1.9 2 2 2h3.6M8.6 13.6h6.8M8.6 17h4.4" fill="none" stroke="#50555f" stroke-width="1.7" stroke-linecap="round"/></svg><svg class="ic" style="left:591.3px;top:506.6px" width="25" height="25" viewBox="0 0 24 24"><rect x="4" y="4" width="16" height="16" rx="2.6" fill="none" stroke="#50555f" stroke-width="1.7"/><path d="M8.3 12.1l2.6 2.6 5-5" fill="none" stroke="#50555f" stroke-width="1.7" stroke-linecap="round" stroke-linejoin="round"/></svg><svg class="ic" style="left:627.5px;top:506.6px" width="25" height="25" viewBox="0 0 24 24"><rect x="4" y="4.6" width="16" height="16.2" rx="2.6" fill="none" stroke="#50555f" stroke-width="1.7"/><path d="M4 8.6h16M8.4 2.8v3.4M15.6 2.8v3.4M12 11.6v5.6M9.2 14.4h5.6" fill="none" stroke="#50555f" stroke-width="1.7" stroke-linecap="round"/></svg><div class="badge" style="left:531.4px;top:500.4px">3</div><div class="colh" style="left:850.5px;top:14.0px;border-top:3px solid #a2a9d4"></div><div class="t" style="left:861.5px;top:31.5px;font-size:19.8px;color:#111827;font-weight:700;">Consult Booked</div><div class="t" style="left:862.3px;top:63.0px;font-size:18.0px;color:#6b7280;font-weight:400;">4 Opportunities</div><div class="t" style="left:999.5px;top:63.3px;font-size:17.1px;color:#111827;font-weight:400;-webkit-text-stroke:0.4px #111827">$11,200.00</div><div class="card" style="left:850.5px;top:128.5px;height:130.5px"></div><div class="t" style="left:861.5px;top:143.4px;font-size:20.2px;color:#111827;font-weight:400;-webkit-text-stroke:0.3px #111827">Saruman The White</div><div class="t" style="left:862.5px;top:179.4px;font-size:18.6px;color:#4b5563;font-weight:400;-webkit-text-stroke:0.2px #4b5563">$10,000.00</div><div class="av nr" style="left:1206.1px;top:139.2px">NR</div><svg class="ic" style="left:859.5px;top:222.2px" width="25" height="25" viewBox="0 0 24 24"><path d="M14.2 6.1a4.6 4.6 0 0 1 3.7 3.7M14.3 2.3a8.4 8.4 0 0 1 7.4 7.4" fill="none" stroke="#50555f" stroke-width="1.7" stroke-linecap="round"/><path d="M6.3 3.2 8.6 3.4c.5 0 .8.4.9.8l.7 3.1c.1.4 0 .8-.3 1.1L8.5 10a12.6 12.6 0 0 0 5.5 5.5l1.6-1.4c.3-.3.7-.4 1.1-.3l3.1.7c.4.1.8.4.8.9l.2 2.3c.1 1.5-1.1 2.8-2.6 2.7C10.4 20 4 13.6 3.6 5.8 3.5 4.3 4.8 3.1 6.3 3.2Z" fill="none" stroke="#50555f" stroke-width="1.7" stroke-linejoin="round"/></svg><svg class="ic" style="left:895.7px;top:222.2px" width="25" height="25" viewBox="0 0 24 24"><path d="M4.1 20.1 4.9 16.6A8.1 8.1 0 1 1 7.9 19.4Z" fill="none" stroke="#50555f" stroke-width="1.7" stroke-linejoin="round"/><circle cx="8.6" cy="12.1" r="1.3" fill="#50555f"/><circle cx="12.2" cy="12.1" r="1.3" fill="#50555f"/><circle cx="15.8" cy="12.1" r="1.3" fill="#50555f"/></svg><svg class="ic" style="left:931.9px;top:222.2px" width="25" height="25" viewBox="0 0 24 24"><path d="M3 4.6v5.1c0 .5.2 1 .6 1.4l8.6 8.6c.8.8 2 .8 2.8 0l5-5c.8-.8.8-2 0-2.8L11.4 3.3c-.4-.4-.9-.6-1.4-.6H4.9C3.9 2.7 3 3.6 3 4.6Z" fill="none" stroke="#50555f" stroke-width="1.7" stroke-linejoin="round"/><circle cx="7.4" cy="7.1" r="1.45" fill="#50555f"/></svg><svg class="ic" style="left:968.1px;top:222.2px" width="25" height="25" viewBox="0 0 24 24"><path d="M13.6 2.8H8c-2 0-3.2 1.2-3.2 3.2v12c0 2 1.2 3.2 3.2 3.2h8c2 0 3.2-1.2 3.2-3.2V8.4Z" fill="none" stroke="#50555f" stroke-width="1.7" stroke-linejoin="round"/><path d="M13.6 2.8v3.6c0 1.1.9 2 2 2h3.6M8.6 13.6h6.8M8.6 17h4.4" fill="none" stroke="#50555f" stroke-width="1.7" stroke-linecap="round"/></svg><svg class="ic" style="left:1004.3px;top:222.2px" width="25" height="25" viewBox="0 0 24 24"><rect x="4" y="4" width="16" height="16" rx="2.6" fill="none" stroke="#50555f" stroke-width="1.7"/><path d="M8.3 12.1l2.6 2.6 5-5" fill="none" stroke="#50555f" stroke-width="1.7" stroke-linecap="round" stroke-linejoin="round"/></svg><svg class="ic" style="left:1040.5px;top:222.2px" width="25" height="25" viewBox="0 0 24 24"><rect x="4" y="4.6" width="16" height="16.2" rx="2.6" fill="none" stroke="#50555f" stroke-width="1.7"/><path d="M4 8.6h16M8.4 2.8v3.4M15.6 2.8v3.4M12 11.6v5.6M9.2 14.4h5.6" fill="none" stroke="#50555f" stroke-width="1.7" stroke-linecap="round"/></svg><div class="badge" style="left:944.4px;top:216.0px">4</div><div class="card" style="left:850.5px;top:270.7px;height:130.5px"></div><div class="t" style="left:861.5px;top:285.6px;font-size:20.2px;color:#111827;font-weight:400;-webkit-text-stroke:0.3px #111827">Chew Bacca</div><div class="t" style="left:862.5px;top:321.6px;font-size:18.6px;color:#4b5563;font-weight:400;-webkit-text-stroke:0.2px #4b5563">$400.00</div><div class="av nr" style="left:1206.1px;top:281.4px">NR</div><svg class="ic" style="left:859.5px;top:364.4px" width="25" height="25" viewBox="0 0 24 24"><path d="M14.2 6.1a4.6 4.6 0 0 1 3.7 3.7M14.3 2.3a8.4 8.4 0 0 1 7.4 7.4" fill="none" stroke="#50555f" stroke-width="1.7" stroke-linecap="round"/><path d="M6.3 3.2 8.6 3.4c.5 0 .8.4.9.8l.7 3.1c.1.4 0 .8-.3 1.1L8.5 10a12.6 12.6 0 0 0 5.5 5.5l1.6-1.4c.3-.3.7-.4 1.1-.3l3.1.7c.4.1.8.4.8.9l.2 2.3c.1 1.5-1.1 2.8-2.6 2.7C10.4 20 4 13.6 3.6 5.8 3.5 4.3 4.8 3.1 6.3 3.2Z" fill="none" stroke="#50555f" stroke-width="1.7" stroke-linejoin="round"/></svg><svg class="ic" style="left:895.7px;top:364.4px" width="25" height="25" viewBox="0 0 24 24"><path d="M4.1 20.1 4.9 16.6A8.1 8.1 0 1 1 7.9 19.4Z" fill="none" stroke="#50555f" stroke-width="1.7" stroke-linejoin="round"/><circle cx="8.6" cy="12.1" r="1.3" fill="#50555f"/><circle cx="12.2" cy="12.1" r="1.3" fill="#50555f"/><circle cx="15.8" cy="12.1" r="1.3" fill="#50555f"/></svg><svg class="ic" style="left:931.9px;top:364.4px" width="25" height="25" viewBox="0 0 24 24"><path d="M3 4.6v5.1c0 .5.2 1 .6 1.4l8.6 8.6c.8.8 2 .8 2.8 0l5-5c.8-.8.8-2 0-2.8L11.4 3.3c-.4-.4-.9-.6-1.4-.6H4.9C3.9 2.7 3 3.6 3 4.6Z" fill="none" stroke="#50555f" stroke-width="1.7" stroke-linejoin="round"/><circle cx="7.4" cy="7.1" r="1.45" fill="#50555f"/></svg><svg class="ic" style="left:968.1px;top:364.4px" width="25" height="25" viewBox="0 0 24 24"><path d="M13.6 2.8H8c-2 0-3.2 1.2-3.2 3.2v12c0 2 1.2 3.2 3.2 3.2h8c2 0 3.2-1.2 3.2-3.2V8.4Z" fill="none" stroke="#50555f" stroke-width="1.7" stroke-linejoin="round"/><path d="M13.6 2.8v3.6c0 1.1.9 2 2 2h3.6M8.6 13.6h6.8M8.6 17h4.4" fill="none" stroke="#50555f" stroke-width="1.7" stroke-linecap="round"/></svg><svg class="ic" style="left:1004.3px;top:364.4px" width="25" height="25" viewBox="0 0 24 24"><rect x="4" y="4" width="16" height="16" rx="2.6" fill="none" stroke="#50555f" stroke-width="1.7"/><path d="M8.3 12.1l2.6 2.6 5-5" fill="none" stroke="#50555f" stroke-width="1.7" stroke-linecap="round" stroke-linejoin="round"/></svg><svg class="ic" style="left:1040.5px;top:364.4px" width="25" height="25" viewBox="0 0 24 24"><rect x="4" y="4.6" width="16" height="16.2" rx="2.6" fill="none" stroke="#50555f" stroke-width="1.7"/><path d="M4 8.6h16M8.4 2.8v3.4M15.6 2.8v3.4M12 11.6v5.6M9.2 14.4h5.6" fill="none" stroke="#50555f" stroke-width="1.7" stroke-linecap="round"/></svg><div class="badge" style="left:944.4px;top:358.2px">4</div><div class="card" style="left:850.5px;top:412.9px;height:130.5px"></div><div class="t" style="left:861.5px;top:427.8px;font-size:20.2px;color:#111827;font-weight:400;-webkit-text-stroke:0.3px #111827">John Hammond</div><div class="t" style="left:862.5px;top:463.8px;font-size:18.6px;color:#4b5563;font-weight:400;-webkit-text-stroke:0.2px #4b5563">$400.00</div><div class="av px" style="left:1206.1px;top:423.6px"></div><svg class="ic" style="left:1213.1px;top:430.6px" width="18" height="18" viewBox="0 0 18 18"><circle cx="8" cy="6.3" r="3" fill="none" stroke="#4b5563" stroke-width="1.5"/><path d="M2.8 16c.4-2.9 2.5-4.6 5.2-4.6 1 0 1.8.2 2.5.6" fill="none" stroke="#4b5563" stroke-width="1.5" stroke-linecap="round"/><path d="M12.8 12.6l3.6 3.6M16.4 12.6l-3.6 3.6" stroke="#4b5563" stroke-width="1.5" stroke-linecap="round"/></svg><svg class="ic" style="left:859.5px;top:506.6px" width="25" height="25" viewBox="0 0 24 24"><path d="M14.2 6.1a4.6 4.6 0 0 1 3.7 3.7M14.3 2.3a8.4 8.4 0 0 1 7.4 7.4" fill="none" stroke="#50555f" stroke-width="1.7" stroke-linecap="round"/><path d="M6.3 3.2 8.6 3.4c.5 0 .8.4.9.8l.7 3.1c.1.4 0 .8-.3 1.1L8.5 10a12.6 12.6 0 0 0 5.5 5.5l1.6-1.4c.3-.3.7-.4 1.1-.3l3.1.7c.4.1.8.4.8.9l.2 2.3c.1 1.5-1.1 2.8-2.6 2.7C10.4 20 4 13.6 3.6 5.8 3.5 4.3 4.8 3.1 6.3 3.2Z" fill="none" stroke="#50555f" stroke-width="1.7" stroke-linejoin="round"/></svg><svg class="ic" style="left:895.7px;top:506.6px" width="25" height="25" viewBox="0 0 24 24"><path d="M4.1 20.1 4.9 16.6A8.1 8.1 0 1 1 7.9 19.4Z" fill="none" stroke="#50555f" stroke-width="1.7" stroke-linejoin="round"/><circle cx="8.6" cy="12.1" r="1.3" fill="#50555f"/><circle cx="12.2" cy="12.1" r="1.3" fill="#50555f"/><circle cx="15.8" cy="12.1" r="1.3" fill="#50555f"/></svg><svg class="ic" style="left:931.9px;top:506.6px" width="25" height="25" viewBox="0 0 24 24"><path d="M3 4.6v5.1c0 .5.2 1 .6 1.4l8.6 8.6c.8.8 2 .8 2.8 0l5-5c.8-.8.8-2 0-2.8L11.4 3.3c-.4-.4-.9-.6-1.4-.6H4.9C3.9 2.7 3 3.6 3 4.6Z" fill="none" stroke="#50555f" stroke-width="1.7" stroke-linejoin="round"/><circle cx="7.4" cy="7.1" r="1.45" fill="#50555f"/></svg><svg class="ic" style="left:968.1px;top:506.6px" width="25" height="25" viewBox="0 0 24 24"><path d="M13.6 2.8H8c-2 0-3.2 1.2-3.2 3.2v12c0 2 1.2 3.2 3.2 3.2h8c2 0 3.2-1.2 3.2-3.2V8.4Z" fill="none" stroke="#50555f" stroke-width="1.7" stroke-linejoin="round"/><path d="M13.6 2.8v3.6c0 1.1.9 2 2 2h3.6M8.6 13.6h6.8M8.6 17h4.4" fill="none" stroke="#50555f" stroke-width="1.7" stroke-linecap="round"/></svg><svg class="ic" style="left:1004.3px;top:506.6px" width="25" height="25" viewBox="0 0 24 24"><rect x="4" y="4" width="16" height="16" rx="2.6" fill="none" stroke="#50555f" stroke-width="1.7"/><path d="M8.3 12.1l2.6 2.6 5-5" fill="none" stroke="#50555f" stroke-width="1.7" stroke-linecap="round" stroke-linejoin="round"/></svg><svg class="ic" style="left:1040.5px;top:506.6px" width="25" height="25" viewBox="0 0 24 24"><rect x="4" y="4.6" width="16" height="16.2" rx="2.6" fill="none" stroke="#50555f" stroke-width="1.7"/><path d="M4 8.6h16M8.4 2.8v3.4M15.6 2.8v3.4M12 11.6v5.6M9.2 14.4h5.6" fill="none" stroke="#50555f" stroke-width="1.7" stroke-linecap="round"/></svg><div class="badge" style="left:944.4px;top:500.4px">4</div><div class="card" style="left:850.5px;top:555.1px;height:130.5px"></div><div class="t" style="left:861.5px;top:570.0px;font-size:20.2px;color:#111827;font-weight:400;-webkit-text-stroke:0.3px #111827">Chandler Bing</div><div class="t" style="left:862.5px;top:606.0px;font-size:18.6px;color:#4b5563;font-weight:400;-webkit-text-stroke:0.2px #4b5563">$400.00</div><div class="av nr" style="left:1206.1px;top:565.8px">NR</div><svg class="ic" style="left:859.5px;top:648.8px" width="25" height="25" viewBox="0 0 24 24"><path d="M14.2 6.1a4.6 4.6 0 0 1 3.7 3.7M14.3 2.3a8.4 8.4 0 0 1 7.4 7.4" fill="none" stroke="#50555f" stroke-width="1.7" stroke-linecap="round"/><path d="M6.3 3.2 8.6 3.4c.5 0 .8.4.9.8l.7 3.1c.1.4 0 .8-.3 1.1L8.5 10a12.6 12.6 0 0 0 5.5 5.5l1.6-1.4c.3-.3.7-.4 1.1-.3l3.1.7c.4.1.8.4.8.9l.2 2.3c.1 1.5-1.1 2.8-2.6 2.7C10.4 20 4 13.6 3.6 5.8 3.5 4.3 4.8 3.1 6.3 3.2Z" fill="none" stroke="#50555f" stroke-width="1.7" stroke-linejoin="round"/></svg><svg class="ic" style="left:895.7px;top:648.8px" width="25" height="25" viewBox="0 0 24 24"><path d="M4.1 20.1 4.9 16.6A8.1 8.1 0 1 1 7.9 19.4Z" fill="none" stroke="#50555f" stroke-width="1.7" stroke-linejoin="round"/><circle cx="8.6" cy="12.1" r="1.3" fill="#50555f"/><circle cx="12.2" cy="12.1" r="1.3" fill="#50555f"/><circle cx="15.8" cy="12.1" r="1.3" fill="#50555f"/></svg><svg class="ic" style="left:931.9px;top:648.8px" width="25" height="25" viewBox="0 0 24 24"><path d="M3 4.6v5.1c0 .5.2 1 .6 1.4l8.6 8.6c.8.8 2 .8 2.8 0l5-5c.8-.8.8-2 0-2.8L11.4 3.3c-.4-.4-.9-.6-1.4-.6H4.9C3.9 2.7 3 3.6 3 4.6Z" fill="none" stroke="#50555f" stroke-width="1.7" stroke-linejoin="round"/><circle cx="7.4" cy="7.1" r="1.45" fill="#50555f"/></svg><svg class="ic" style="left:968.1px;top:648.8px" width="25" height="25" viewBox="0 0 24 24"><path d="M13.6 2.8H8c-2 0-3.2 1.2-3.2 3.2v12c0 2 1.2 3.2 3.2 3.2h8c2 0 3.2-1.2 3.2-3.2V8.4Z" fill="none" stroke="#50555f" stroke-width="1.7" stroke-linejoin="round"/><path d="M13.6 2.8v3.6c0 1.1.9 2 2 2h3.6M8.6 13.6h6.8M8.6 17h4.4" fill="none" stroke="#50555f" stroke-width="1.7" stroke-linecap="round"/></svg><svg class="ic" style="left:1004.3px;top:648.8px" width="25" height="25" viewBox="0 0 24 24"><rect x="4" y="4" width="16" height="16" rx="2.6" fill="none" stroke="#50555f" stroke-width="1.7"/><path d="M8.3 12.1l2.6 2.6 5-5" fill="none" stroke="#50555f" stroke-width="1.7" stroke-linecap="round" stroke-linejoin="round"/></svg><svg class="ic" style="left:1040.5px;top:648.8px" width="25" height="25" viewBox="0 0 24 24"><rect x="4" y="4.6" width="16" height="16.2" rx="2.6" fill="none" stroke="#50555f" stroke-width="1.7"/><path d="M4 8.6h16M8.4 2.8v3.4M15.6 2.8v3.4M12 11.6v5.6M9.2 14.4h5.6" fill="none" stroke="#50555f" stroke-width="1.7" stroke-linecap="round"/></svg><div class="badge" style="left:944.4px;top:642.6px">3</div><div class="colh" style="left:1263.5px;top:14.0px;border-top:3px solid #86a2f3"></div><div class="t" style="left:1274.5px;top:31.5px;font-size:19.8px;color:#111827;font-weight:700;">Verbal Yes</div><div class="t" style="left:1275.3px;top:63.0px;font-size:18.0px;color:#6b7280;font-weight:400;">7 Opportunities</div><div class="t" style="left:1412.5px;top:63.3px;font-size:17.1px;color:#111827;font-weight:400;-webkit-text-stroke:0.4px #111827">$2,800.00</div><div class="card" style="left:1263.5px;top:128.5px;height:130.5px"></div><div class="t" style="left:1274.5px;top:143.4px;font-size:20.2px;color:#111827;font-weight:400;-webkit-text-stroke:0.3px #111827">Obi Wan Kenobi</div><div class="t" style="left:1275.5px;top:179.4px;font-size:18.6px;color:#4b5563;font-weight:400;-webkit-text-stroke:0.2px #4b5563">$400.00</div><div class="av nr" style="left:1619.1px;top:139.2px">NR</div><svg class="ic" style="left:1272.5px;top:222.2px" width="25" height="25" viewBox="0 0 24 24"><path d="M14.2 6.1a4.6 4.6 0 0 1 3.7 3.7M14.3 2.3a8.4 8.4 0 0 1 7.4 7.4" fill="none" stroke="#50555f" stroke-width="1.7" stroke-linecap="round"/><path d="M6.3 3.2 8.6 3.4c.5 0 .8.4.9.8l.7 3.1c.1.4 0 .8-.3 1.1L8.5 10a12.6 12.6 0 0 0 5.5 5.5l1.6-1.4c.3-.3.7-.4 1.1-.3l3.1.7c.4.1.8.4.8.9l.2 2.3c.1 1.5-1.1 2.8-2.6 2.7C10.4 20 4 13.6 3.6 5.8 3.5 4.3 4.8 3.1 6.3 3.2Z" fill="none" stroke="#50555f" stroke-width="1.7" stroke-linejoin="round"/></svg><svg class="ic" style="left:1308.7px;top:222.2px" width="25" height="25" viewBox="0 0 24 24"><path d="M4.1 20.1 4.9 16.6A8.1 8.1 0 1 1 7.9 19.4Z" fill="none" stroke="#50555f" stroke-width="1.7" stroke-linejoin="round"/><circle cx="8.6" cy="12.1" r="1.3" fill="#50555f"/><circle cx="12.2" cy="12.1" r="1.3" fill="#50555f"/><circle cx="15.8" cy="12.1" r="1.3" fill="#50555f"/></svg><svg class="ic" style="left:1344.9px;top:222.2px" width="25" height="25" viewBox="0 0 24 24"><path d="M3 4.6v5.1c0 .5.2 1 .6 1.4l8.6 8.6c.8.8 2 .8 2.8 0l5-5c.8-.8.8-2 0-2.8L11.4 3.3c-.4-.4-.9-.6-1.4-.6H4.9C3.9 2.7 3 3.6 3 4.6Z" fill="none" stroke="#50555f" stroke-width="1.7" stroke-linejoin="round"/><circle cx="7.4" cy="7.1" r="1.45" fill="#50555f"/></svg><svg class="ic" style="left:1381.1px;top:222.2px" width="25" height="25" viewBox="0 0 24 24"><path d="M13.6 2.8H8c-2 0-3.2 1.2-3.2 3.2v12c0 2 1.2 3.2 3.2 3.2h8c2 0 3.2-1.2 3.2-3.2V8.4Z" fill="none" stroke="#50555f" stroke-width="1.7" stroke-linejoin="round"/><path d="M13.6 2.8v3.6c0 1.1.9 2 2 2h3.6M8.6 13.6h6.8M8.6 17h4.4" fill="none" stroke="#50555f" stroke-width="1.7" stroke-linecap="round"/></svg><svg class="ic" style="left:1417.3px;top:222.2px" width="25" height="25" viewBox="0 0 24 24"><rect x="4" y="4" width="16" height="16" rx="2.6" fill="none" stroke="#50555f" stroke-width="1.7"/><path d="M8.3 12.1l2.6 2.6 5-5" fill="none" stroke="#50555f" stroke-width="1.7" stroke-linecap="round" stroke-linejoin="round"/></svg><svg class="ic" style="left:1453.5px;top:222.2px" width="25" height="25" viewBox="0 0 24 24"><rect x="4" y="4.6" width="16" height="16.2" rx="2.6" fill="none" stroke="#50555f" stroke-width="1.7"/><path d="M4 8.6h16M8.4 2.8v3.4M15.6 2.8v3.4M12 11.6v5.6M9.2 14.4h5.6" fill="none" stroke="#50555f" stroke-width="1.7" stroke-linecap="round"/></svg><div class="badge" style="left:1357.4px;top:216.0px">3</div><div class="card" style="left:1263.5px;top:270.7px;height:130.5px"></div><div class="t" style="left:1274.5px;top:285.6px;font-size:20.2px;color:#111827;font-weight:400;-webkit-text-stroke:0.3px #111827">Ian Malcolm</div><div class="t" style="left:1275.5px;top:321.6px;font-size:18.6px;color:#4b5563;font-weight:400;-webkit-text-stroke:0.2px #4b5563">$400.00</div><div class="av nr" style="left:1619.1px;top:281.4px">NR</div><svg class="ic" style="left:1272.5px;top:364.4px" width="25" height="25" viewBox="0 0 24 24"><path d="M14.2 6.1a4.6 4.6 0 0 1 3.7 3.7M14.3 2.3a8.4 8.4 0 0 1 7.4 7.4" fill="none" stroke="#50555f" stroke-width="1.7" stroke-linecap="round"/><path d="M6.3 3.2 8.6 3.4c.5 0 .8.4.9.8l.7 3.1c.1.4 0 .8-.3 1.1L8.5 10a12.6 12.6 0 0 0 5.5 5.5l1.6-1.4c.3-.3.7-.4 1.1-.3l3.1.7c.4.1.8.4.8.9l.2 2.3c.1 1.5-1.1 2.8-2.6 2.7C10.4 20 4 13.6 3.6 5.8 3.5 4.3 4.8 3.1 6.3 3.2Z" fill="none" stroke="#50555f" stroke-width="1.7" stroke-linejoin="round"/></svg><svg class="ic" style="left:1308.7px;top:364.4px" width="25" height="25" viewBox="0 0 24 24"><path d="M4.1 20.1 4.9 16.6A8.1 8.1 0 1 1 7.9 19.4Z" fill="none" stroke="#50555f" stroke-width="1.7" stroke-linejoin="round"/><circle cx="8.6" cy="12.1" r="1.3" fill="#50555f"/><circle cx="12.2" cy="12.1" r="1.3" fill="#50555f"/><circle cx="15.8" cy="12.1" r="1.3" fill="#50555f"/></svg><svg class="ic" style="left:1344.9px;top:364.4px" width="25" height="25" viewBox="0 0 24 24"><path d="M3 4.6v5.1c0 .5.2 1 .6 1.4l8.6 8.6c.8.8 2 .8 2.8 0l5-5c.8-.8.8-2 0-2.8L11.4 3.3c-.4-.4-.9-.6-1.4-.6H4.9C3.9 2.7 3 3.6 3 4.6Z" fill="none" stroke="#50555f" stroke-width="1.7" stroke-linejoin="round"/><circle cx="7.4" cy="7.1" r="1.45" fill="#50555f"/></svg><svg class="ic" style="left:1381.1px;top:364.4px" width="25" height="25" viewBox="0 0 24 24"><path d="M13.6 2.8H8c-2 0-3.2 1.2-3.2 3.2v12c0 2 1.2 3.2 3.2 3.2h8c2 0 3.2-1.2 3.2-3.2V8.4Z" fill="none" stroke="#50555f" stroke-width="1.7" stroke-linejoin="round"/><path d="M13.6 2.8v3.6c0 1.1.9 2 2 2h3.6M8.6 13.6h6.8M8.6 17h4.4" fill="none" stroke="#50555f" stroke-width="1.7" stroke-linecap="round"/></svg><svg class="ic" style="left:1417.3px;top:364.4px" width="25" height="25" viewBox="0 0 24 24"><rect x="4" y="4" width="16" height="16" rx="2.6" fill="none" stroke="#50555f" stroke-width="1.7"/><path d="M8.3 12.1l2.6 2.6 5-5" fill="none" stroke="#50555f" stroke-width="1.7" stroke-linecap="round" stroke-linejoin="round"/></svg><svg class="ic" style="left:1453.5px;top:364.4px" width="25" height="25" viewBox="0 0 24 24"><rect x="4" y="4.6" width="16" height="16.2" rx="2.6" fill="none" stroke="#50555f" stroke-width="1.7"/><path d="M4 8.6h16M8.4 2.8v3.4M15.6 2.8v3.4M12 11.6v5.6M9.2 14.4h5.6" fill="none" stroke="#50555f" stroke-width="1.7" stroke-linecap="round"/></svg><div class="badge" style="left:1357.4px;top:358.2px">3</div><div class="card" style="left:1263.5px;top:412.9px;height:130.5px"></div><div class="t" style="left:1274.5px;top:427.8px;font-size:20.2px;color:#111827;font-weight:400;-webkit-text-stroke:0.3px #111827">Henry Wu</div><div class="t" style="left:1275.5px;top:463.8px;font-size:18.6px;color:#4b5563;font-weight:400;-webkit-text-stroke:0.2px #4b5563">$400.00</div><div class="av nr" style="left:1619.1px;top:423.6px">NR</div><svg class="ic" style="left:1272.5px;top:506.6px" width="25" height="25" viewBox="0 0 24 24"><path d="M14.2 6.1a4.6 4.6 0 0 1 3.7 3.7M14.3 2.3a8.4 8.4 0 0 1 7.4 7.4" fill="none" stroke="#50555f" stroke-width="1.7" stroke-linecap="round"/><path d="M6.3 3.2 8.6 3.4c.5 0 .8.4.9.8l.7 3.1c.1.4 0 .8-.3 1.1L8.5 10a12.6 12.6 0 0 0 5.5 5.5l1.6-1.4c.3-.3.7-.4 1.1-.3l3.1.7c.4.1.8.4.8.9l.2 2.3c.1 1.5-1.1 2.8-2.6 2.7C10.4 20 4 13.6 3.6 5.8 3.5 4.3 4.8 3.1 6.3 3.2Z" fill="none" stroke="#50555f" stroke-width="1.7" stroke-linejoin="round"/></svg><svg class="ic" style="left:1308.7px;top:506.6px" width="25" height="25" viewBox="0 0 24 24"><path d="M4.1 20.1 4.9 16.6A8.1 8.1 0 1 1 7.9 19.4Z" fill="none" stroke="#50555f" stroke-width="1.7" stroke-linejoin="round"/><circle cx="8.6" cy="12.1" r="1.3" fill="#50555f"/><circle cx="12.2" cy="12.1" r="1.3" fill="#50555f"/><circle cx="15.8" cy="12.1" r="1.3" fill="#50555f"/></svg><svg class="ic" style="left:1344.9px;top:506.6px" width="25" height="25" viewBox="0 0 24 24"><path d="M3 4.6v5.1c0 .5.2 1 .6 1.4l8.6 8.6c.8.8 2 .8 2.8 0l5-5c.8-.8.8-2 0-2.8L11.4 3.3c-.4-.4-.9-.6-1.4-.6H4.9C3.9 2.7 3 3.6 3 4.6Z" fill="none" stroke="#50555f" stroke-width="1.7" stroke-linejoin="round"/><circle cx="7.4" cy="7.1" r="1.45" fill="#50555f"/></svg><svg class="ic" style="left:1381.1px;top:506.6px" width="25" height="25" viewBox="0 0 24 24"><path d="M13.6 2.8H8c-2 0-3.2 1.2-3.2 3.2v12c0 2 1.2 3.2 3.2 3.2h8c2 0 3.2-1.2 3.2-3.2V8.4Z" fill="none" stroke="#50555f" stroke-width="1.7" stroke-linejoin="round"/><path d="M13.6 2.8v3.6c0 1.1.9 2 2 2h3.6M8.6 13.6h6.8M8.6 17h4.4" fill="none" stroke="#50555f" stroke-width="1.7" stroke-linecap="round"/></svg><svg class="ic" style="left:1417.3px;top:506.6px" width="25" height="25" viewBox="0 0 24 24"><rect x="4" y="4" width="16" height="16" rx="2.6" fill="none" stroke="#50555f" stroke-width="1.7"/><path d="M8.3 12.1l2.6 2.6 5-5" fill="none" stroke="#50555f" stroke-width="1.7" stroke-linecap="round" stroke-linejoin="round"/></svg><svg class="ic" style="left:1453.5px;top:506.6px" width="25" height="25" viewBox="0 0 24 24"><rect x="4" y="4.6" width="16" height="16.2" rx="2.6" fill="none" stroke="#50555f" stroke-width="1.7"/><path d="M4 8.6h16M8.4 2.8v3.4M15.6 2.8v3.4M12 11.6v5.6M9.2 14.4h5.6" fill="none" stroke="#50555f" stroke-width="1.7" stroke-linecap="round"/></svg><div class="badge" style="left:1357.4px;top:500.4px">4</div><div class="card" style="left:1263.5px;top:555.1px;height:130.5px"></div><div class="t" style="left:1274.5px;top:570.0px;font-size:20.2px;color:#111827;font-weight:400;-webkit-text-stroke:0.3px #111827">Gandalf Mithrandir</div><div class="t" style="left:1275.5px;top:606.0px;font-size:18.6px;color:#4b5563;font-weight:400;-webkit-text-stroke:0.2px #4b5563">$400.00</div><div class="av px" style="left:1619.1px;top:565.8px"></div><svg class="ic" style="left:1626.1px;top:572.8px" width="18" height="18" viewBox="0 0 18 18"><circle cx="8" cy="6.3" r="3" fill="none" stroke="#4b5563" stroke-width="1.5"/><path d="M2.8 16c.4-2.9 2.5-4.6 5.2-4.6 1 0 1.8.2 2.5.6" fill="none" stroke="#4b5563" stroke-width="1.5" stroke-linecap="round"/><path d="M12.8 12.6l3.6 3.6M16.4 12.6l-3.6 3.6" stroke="#4b5563" stroke-width="1.5" stroke-linecap="round"/></svg><svg class="ic" style="left:1272.5px;top:648.8px" width="25" height="25" viewBox="0 0 24 24"><path d="M14.2 6.1a4.6 4.6 0 0 1 3.7 3.7M14.3 2.3a8.4 8.4 0 0 1 7.4 7.4" fill="none" stroke="#50555f" stroke-width="1.7" stroke-linecap="round"/><path d="M6.3 3.2 8.6 3.4c.5 0 .8.4.9.8l.7 3.1c.1.4 0 .8-.3 1.1L8.5 10a12.6 12.6 0 0 0 5.5 5.5l1.6-1.4c.3-.3.7-.4 1.1-.3l3.1.7c.4.1.8.4.8.9l.2 2.3c.1 1.5-1.1 2.8-2.6 2.7C10.4 20 4 13.6 3.6 5.8 3.5 4.3 4.8 3.1 6.3 3.2Z" fill="none" stroke="#50555f" stroke-width="1.7" stroke-linejoin="round"/></svg><svg class="ic" style="left:1308.7px;top:648.8px" width="25" height="25" viewBox="0 0 24 24"><path d="M4.1 20.1 4.9 16.6A8.1 8.1 0 1 1 7.9 19.4Z" fill="none" stroke="#50555f" stroke-width="1.7" stroke-linejoin="round"/><circle cx="8.6" cy="12.1" r="1.3" fill="#50555f"/><circle cx="12.2" cy="12.1" r="1.3" fill="#50555f"/><circle cx="15.8" cy="12.1" r="1.3" fill="#50555f"/></svg><svg class="ic" style="left:1344.9px;top:648.8px" width="25" height="25" viewBox="0 0 24 24"><path d="M3 4.6v5.1c0 .5.2 1 .6 1.4l8.6 8.6c.8.8 2 .8 2.8 0l5-5c.8-.8.8-2 0-2.8L11.4 3.3c-.4-.4-.9-.6-1.4-.6H4.9C3.9 2.7 3 3.6 3 4.6Z" fill="none" stroke="#50555f" stroke-width="1.7" stroke-linejoin="round"/><circle cx="7.4" cy="7.1" r="1.45" fill="#50555f"/></svg><svg class="ic" style="left:1381.1px;top:648.8px" width="25" height="25" viewBox="0 0 24 24"><path d="M13.6 2.8H8c-2 0-3.2 1.2-3.2 3.2v12c0 2 1.2 3.2 3.2 3.2h8c2 0 3.2-1.2 3.2-3.2V8.4Z" fill="none" stroke="#50555f" stroke-width="1.7" stroke-linejoin="round"/><path d="M13.6 2.8v3.6c0 1.1.9 2 2 2h3.6M8.6 13.6h6.8M8.6 17h4.4" fill="none" stroke="#50555f" stroke-width="1.7" stroke-linecap="round"/></svg><svg class="ic" style="left:1417.3px;top:648.8px" width="25" height="25" viewBox="0 0 24 24"><rect x="4" y="4" width="16" height="16" rx="2.6" fill="none" stroke="#50555f" stroke-width="1.7"/><path d="M8.3 12.1l2.6 2.6 5-5" fill="none" stroke="#50555f" stroke-width="1.7" stroke-linecap="round" stroke-linejoin="round"/></svg><svg class="ic" style="left:1453.5px;top:648.8px" width="25" height="25" viewBox="0 0 24 24"><rect x="4" y="4.6" width="16" height="16.2" rx="2.6" fill="none" stroke="#50555f" stroke-width="1.7"/><path d="M4 8.6h16M8.4 2.8v3.4M15.6 2.8v3.4M12 11.6v5.6M9.2 14.4h5.6" fill="none" stroke="#50555f" stroke-width="1.7" stroke-linecap="round"/></svg><div class="badge" style="left:1357.4px;top:642.6px">4</div><div class="card" style="left:1263.5px;top:697.3px;height:130.5px"></div><div class="t" style="left:1274.5px;top:712.2px;font-size:20.2px;color:#111827;font-weight:400;-webkit-text-stroke:0.3px #111827">Alan Grant</div><div class="t" style="left:1275.5px;top:748.2px;font-size:18.6px;color:#4b5563;font-weight:400;-webkit-text-stroke:0.2px #4b5563">$400.00</div><div class="av nr" style="left:1619.1px;top:708.0px">NR</div><svg class="ic" style="left:1272.5px;top:791.0px" width="25" height="25" viewBox="0 0 24 24"><path d="M14.2 6.1a4.6 4.6 0 0 1 3.7 3.7M14.3 2.3a8.4 8.4 0 0 1 7.4 7.4" fill="none" stroke="#50555f" stroke-width="1.7" stroke-linecap="round"/><path d="M6.3 3.2 8.6 3.4c.5 0 .8.4.9.8l.7 3.1c.1.4 0 .8-.3 1.1L8.5 10a12.6 12.6 0 0 0 5.5 5.5l1.6-1.4c.3-.3.7-.4 1.1-.3l3.1.7c.4.1.8.4.8.9l.2 2.3c.1 1.5-1.1 2.8-2.6 2.7C10.4 20 4 13.6 3.6 5.8 3.5 4.3 4.8 3.1 6.3 3.2Z" fill="none" stroke="#50555f" stroke-width="1.7" stroke-linejoin="round"/></svg><svg class="ic" style="left:1308.7px;top:791.0px" width="25" height="25" viewBox="0 0 24 24"><path d="M4.1 20.1 4.9 16.6A8.1 8.1 0 1 1 7.9 19.4Z" fill="none" stroke="#50555f" stroke-width="1.7" stroke-linejoin="round"/><circle cx="8.6" cy="12.1" r="1.3" fill="#50555f"/><circle cx="12.2" cy="12.1" r="1.3" fill="#50555f"/><circle cx="15.8" cy="12.1" r="1.3" fill="#50555f"/></svg><svg class="ic" style="left:1344.9px;top:791.0px" width="25" height="25" viewBox="0 0 24 24"><path d="M3 4.6v5.1c0 .5.2 1 .6 1.4l8.6 8.6c.8.8 2 .8 2.8 0l5-5c.8-.8.8-2 0-2.8L11.4 3.3c-.4-.4-.9-.6-1.4-.6H4.9C3.9 2.7 3 3.6 3 4.6Z" fill="none" stroke="#50555f" stroke-width="1.7" stroke-linejoin="round"/><circle cx="7.4" cy="7.1" r="1.45" fill="#50555f"/></svg><svg class="ic" style="left:1381.1px;top:791.0px" width="25" height="25" viewBox="0 0 24 24"><path d="M13.6 2.8H8c-2 0-3.2 1.2-3.2 3.2v12c0 2 1.2 3.2 3.2 3.2h8c2 0 3.2-1.2 3.2-3.2V8.4Z" fill="none" stroke="#50555f" stroke-width="1.7" stroke-linejoin="round"/><path d="M13.6 2.8v3.6c0 1.1.9 2 2 2h3.6M8.6 13.6h6.8M8.6 17h4.4" fill="none" stroke="#50555f" stroke-width="1.7" stroke-linecap="round"/></svg><svg class="ic" style="left:1417.3px;top:791.0px" width="25" height="25" viewBox="0 0 24 24"><rect x="4" y="4" width="16" height="16" rx="2.6" fill="none" stroke="#50555f" stroke-width="1.7"/><path d="M8.3 12.1l2.6 2.6 5-5" fill="none" stroke="#50555f" stroke-width="1.7" stroke-linecap="round" stroke-linejoin="round"/></svg><svg class="ic" style="left:1453.5px;top:791.0px" width="25" height="25" viewBox="0 0 24 24"><rect x="4" y="4.6" width="16" height="16.2" rx="2.6" fill="none" stroke="#50555f" stroke-width="1.7"/><path d="M4 8.6h16M8.4 2.8v3.4M15.6 2.8v3.4M12 11.6v5.6M9.2 14.4h5.6" fill="none" stroke="#50555f" stroke-width="1.7" stroke-linecap="round"/></svg><div class="badge" style="left:1357.4px;top:784.8px">3</div><div class="card" style="left:1263.5px;top:839.5px;height:130.5px"></div><div class="t" style="left:1274.5px;top:854.4px;font-size:20.2px;color:#111827;font-weight:400;-webkit-text-stroke:0.3px #111827">Anakin "Darth Vader" Skywalker</div><div class="t" style="left:1275.5px;top:890.4px;font-size:18.6px;color:#4b5563;font-weight:400;-webkit-text-stroke:0.2px #4b5563">$400.00</div><div class="av nr" style="left:1619.1px;top:850.2px">NR</div><svg class="ic" style="left:1272.5px;top:933.2px" width="25" height="25" viewBox="0 0 24 24"><path d="M14.2 6.1a4.6 4.6 0 0 1 3.7 3.7M14.3 2.3a8.4 8.4 0 0 1 7.4 7.4" fill="none" stroke="#50555f" stroke-width="1.7" stroke-linecap="round"/><path d="M6.3 3.2 8.6 3.4c.5 0 .8.4.9.8l.7 3.1c.1.4 0 .8-.3 1.1L8.5 10a12.6 12.6 0 0 0 5.5 5.5l1.6-1.4c.3-.3.7-.4 1.1-.3l3.1.7c.4.1.8.4.8.9l.2 2.3c.1 1.5-1.1 2.8-2.6 2.7C10.4 20 4 13.6 3.6 5.8 3.5 4.3 4.8 3.1 6.3 3.2Z" fill="none" stroke="#50555f" stroke-width="1.7" stroke-linejoin="round"/></svg><svg class="ic" style="left:1308.7px;top:933.2px" width="25" height="25" viewBox="0 0 24 24"><path d="M4.1 20.1 4.9 16.6A8.1 8.1 0 1 1 7.9 19.4Z" fill="none" stroke="#50555f" stroke-width="1.7" stroke-linejoin="round"/><circle cx="8.6" cy="12.1" r="1.3" fill="#50555f"/><circle cx="12.2" cy="12.1" r="1.3" fill="#50555f"/><circle cx="15.8" cy="12.1" r="1.3" fill="#50555f"/></svg><svg class="ic" style="left:1344.9px;top:933.2px" width="25" height="25" viewBox="0 0 24 24"><path d="M3 4.6v5.1c0 .5.2 1 .6 1.4l8.6 8.6c.8.8 2 .8 2.8 0l5-5c.8-.8.8-2 0-2.8L11.4 3.3c-.4-.4-.9-.6-1.4-.6H4.9C3.9 2.7 3 3.6 3 4.6Z" fill="none" stroke="#50555f" stroke-width="1.7" stroke-linejoin="round"/><circle cx="7.4" cy="7.1" r="1.45" fill="#50555f"/></svg><svg class="ic" style="left:1381.1px;top:933.2px" width="25" height="25" viewBox="0 0 24 24"><path d="M13.6 2.8H8c-2 0-3.2 1.2-3.2 3.2v12c0 2 1.2 3.2 3.2 3.2h8c2 0 3.2-1.2 3.2-3.2V8.4Z" fill="none" stroke="#50555f" stroke-width="1.7" stroke-linejoin="round"/><path d="M13.6 2.8v3.6c0 1.1.9 2 2 2h3.6M8.6 13.6h6.8M8.6 17h4.4" fill="none" stroke="#50555f" stroke-width="1.7" stroke-linecap="round"/></svg><svg class="ic" style="left:1417.3px;top:933.2px" width="25" height="25" viewBox="0 0 24 24"><rect x="4" y="4" width="16" height="16" rx="2.6" fill="none" stroke="#50555f" stroke-width="1.7"/><path d="M8.3 12.1l2.6 2.6 5-5" fill="none" stroke="#50555f" stroke-width="1.7" stroke-linecap="round" stroke-linejoin="round"/></svg><svg class="ic" style="left:1453.5px;top:933.2px" width="25" height="25" viewBox="0 0 24 24"><rect x="4" y="4.6" width="16" height="16.2" rx="2.6" fill="none" stroke="#50555f" stroke-width="1.7"/><path d="M4 8.6h16M8.4 2.8v3.4M15.6 2.8v3.4M12 11.6v5.6M9.2 14.4h5.6" fill="none" stroke="#50555f" stroke-width="1.7" stroke-linecap="round"/></svg><div class="colh" style="left:1676.2px;top:14.0px;border-top:3px solid #5b82ee"></div><div class="t" style="left:1687.2px;top:31.5px;font-size:19.8px;color:#111827;font-weight:700;">Proposal Signed</div><div class="t" style="left:1688.0px;top:63.0px;font-size:18.0px;color:#6b7280;font-weight:400;">0 Opportunities</div><div class="t" style="left:1825.2px;top:63.3px;font-size:17.1px;color:#111827;font-weight:400;-webkit-text-stroke:0.4px #111827">$0.00</div><div class="colh" style="left:2088.2px;top:14.0px;border-top:3px solid #f0914f"></div><div class="t" style="left:2099.2px;top:31.5px;font-size:19.8px;color:#111827;font-weight:700;">Invoice Sent</div><div class="t" style="left:2100.0px;top:63.0px;font-size:18.0px;color:#6b7280;font-weight:400;">0 Opportunities</div><div class="t" style="left:2237.2px;top:63.3px;font-size:17.1px;color:#111827;font-weight:400;-webkit-text-stroke:0.4px #111827">$0.00</div>
</div>
<svg class="ic" style="left:0;top:0" width="2560" height="1311" viewBox="0 0 2560 1311"><rect x="1182.8" y="493.4" width="413.7" height="141.4" fill="none" stroke="#c70f1f" stroke-width="6.4"/><path d="M1751.8 149.8 1488 462" stroke="#c70f1f" stroke-width="6" stroke-linecap="butt"/><path d="M1474 479.3 1501.5 465.5 1482.5 449.5Z" fill="#c70f1f"/></svg>
</div></body></html>
